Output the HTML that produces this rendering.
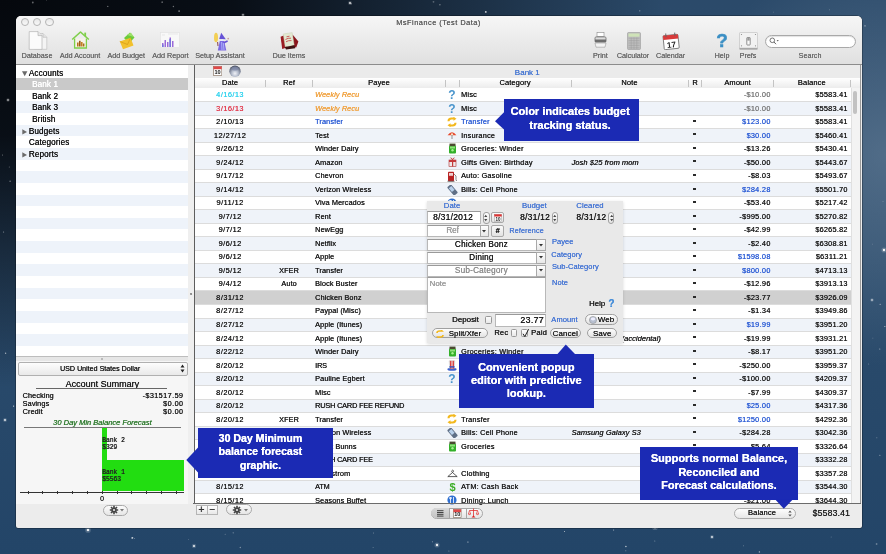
<!DOCTYPE html>
<html><head><meta charset="utf-8"><title>MsFinance</title>
<style>html,body{margin:0;padding:0;width:886px;height:554px;overflow:hidden;position:relative;font-family:'Liberation Sans', sans-serif}</style>
</head><body>
<div style="position:absolute;left:0;top:0;width:886px;height:554px;will-change:transform">
<div style="position:absolute;left:0;top:0;width:886px;height:554px;background:radial-gradient(ellipse 75% 70% at 0% 0%, rgba(5,8,13,1) 0%, rgba(5,8,13,0.9) 35%, rgba(5,8,13,0) 100%), radial-gradient(ellipse 22% 38% at 100% 28%, rgba(105,130,155,0.6), rgba(105,130,155,0) 100%), linear-gradient(to bottom, #2b4a6a 0%, #2c4c6c 45%, #234568 100%)"></div>
<svg style="position:absolute;left:0.00px;top:0.00px" width="886" height="554" viewBox="0 0 886 554"><circle cx="865.0" cy="25.8" r="0.9" fill="#fff" fill-opacity="0.32"/><circle cx="373.6" cy="533.0" r="0.4" fill="#fff" fill-opacity="0.67"/><circle cx="879.9" cy="455.3" r="0.5" fill="#fff" fill-opacity="0.64"/><circle cx="625.9" cy="546.5" r="0.7" fill="#fff" fill-opacity="0.74"/><circle cx="3.6" cy="232.1" r="0.5" fill="#fff" fill-opacity="0.59"/><circle cx="872.4" cy="244.1" r="0.4" fill="#fff" fill-opacity="0.44"/><circle cx="46.6" cy="0.1" r="0.4" fill="#fff" fill-opacity="0.55"/><circle cx="432.4" cy="541.7" r="0.5" fill="#fff" fill-opacity="0.52"/><circle cx="467.9" cy="542.1" r="0.9" fill="#fff" fill-opacity="0.30"/><circle cx="876.8" cy="437.7" r="0.5" fill="#fff" fill-opacity="0.39"/><circle cx="613.6" cy="529.9" r="0.5" fill="#fff" fill-opacity="0.69"/><circle cx="872.9" cy="338.1" r="0.4" fill="#fff" fill-opacity="0.51"/><circle cx="868.6" cy="364.1" r="0.5" fill="#fff" fill-opacity="0.34"/><circle cx="485.8" cy="11.9" r="0.9" fill="#fff" fill-opacity="0.78"/><circle cx="162.2" cy="2.2" r="0.9" fill="#fff" fill-opacity="0.33"/><circle cx="625.8" cy="550.7" r="0.5" fill="#fff" fill-opacity="0.44"/><circle cx="639.8" cy="10.8" r="0.6" fill="#fff" fill-opacity="0.50"/><circle cx="107.8" cy="6.4" r="0.6" fill="#fff" fill-opacity="0.48"/><circle cx="831.2" cy="536.9" r="0.5" fill="#fff" fill-opacity="0.28"/><circle cx="13.6" cy="406.1" r="0.6" fill="#fff" fill-opacity="0.79"/><circle cx="876.6" cy="544.0" r="0.9" fill="#fff" fill-opacity="0.32"/><circle cx="233.2" cy="532.8" r="0.6" fill="#fff" fill-opacity="0.43"/><circle cx="564.5" cy="531.6" r="0.5" fill="#fff" fill-opacity="0.71"/><circle cx="433.5" cy="1.8" r="0.9" fill="#fff" fill-opacity="0.29"/><circle cx="880.1" cy="304.2" r="0.5" fill="#fff" fill-opacity="0.79"/><circle cx="829.5" cy="9.7" r="0.5" fill="#fff" fill-opacity="0.29"/><circle cx="448.9" cy="551.0" r="0.5" fill="#fff" fill-opacity="0.46"/><circle cx="173.4" cy="6.5" r="0.7" fill="#fff" fill-opacity="0.41"/><circle cx="884.9" cy="326.4" r="0.5" fill="#fff" fill-opacity="0.76"/><circle cx="131.9" cy="538.0" r="0.5" fill="#fff" fill-opacity="0.53"/><circle cx="654.8" cy="540.9" r="0.5" fill="#fff" fill-opacity="0.47"/><circle cx="179.1" cy="11.1" r="0.9" fill="#fff" fill-opacity="0.48"/><circle cx="773.4" cy="12.1" r="0.4" fill="#fff" fill-opacity="0.48"/><circle cx="134.7" cy="538.4" r="0.4" fill="#fff" fill-opacity="0.77"/><circle cx="9.3" cy="167.0" r="0.5" fill="#fff" fill-opacity="0.40"/><circle cx="351.2" cy="3.7" r="0.5" fill="#fff" fill-opacity="0.66"/><circle cx="188.7" cy="539.7" r="0.4" fill="#fff" fill-opacity="0.48"/><circle cx="743.5" cy="545.7" r="0.5" fill="#fff" fill-opacity="0.34"/><circle cx="2.5" cy="155.0" r="0.5" fill="#fff" fill-opacity="0.48"/><circle cx="439.9" cy="4.8" r="0.7" fill="#fff" fill-opacity="0.42"/><circle cx="373.1" cy="547.6" r="0.5" fill="#fff" fill-opacity="0.35"/><circle cx="32.8" cy="2.5" r="0.9" fill="#fff" fill-opacity="0.38"/><circle cx="5.6" cy="353.2" r="0.7" fill="#fff" fill-opacity="0.59"/><circle cx="10.1" cy="181.3" r="0.7" fill="#fff" fill-opacity="0.45"/><circle cx="240.3" cy="547.5" r="0.7" fill="#fff" fill-opacity="0.42"/><circle cx="883.0" cy="201.5" r="0.4" fill="#fff" fill-opacity="0.46"/><circle cx="132.4" cy="537.8" r="0.9" fill="#fff" fill-opacity="0.74"/><circle cx="759.4" cy="551.9" r="0.7" fill="#fff" fill-opacity="0.63"/><circle cx="225.2" cy="534.2" r="0.5" fill="#fff" fill-opacity="0.36"/><circle cx="879.8" cy="348.9" r="0.5" fill="#fff" fill-opacity="0.66"/><circle cx="88" cy="530" r="2.9" fill="#fff" fill-opacity="0.18"/><circle cx="88" cy="530" r="1.3" fill="#fff" fill-opacity="0.9"/><circle cx="194" cy="546" r="2.2" fill="#fff" fill-opacity="0.18"/><circle cx="194" cy="546" r="1.0" fill="#fff" fill-opacity="0.9"/><circle cx="655" cy="527" r="3.1" fill="#fff" fill-opacity="0.18"/><circle cx="655" cy="527" r="1.4" fill="#fff" fill-opacity="0.9"/><circle cx="437" cy="545" r="2.6" fill="#fff" fill-opacity="0.18"/><circle cx="437" cy="545" r="1.2" fill="#fff" fill-opacity="0.9"/><circle cx="712" cy="537" r="2.0" fill="#fff" fill-opacity="0.18"/><circle cx="712" cy="537" r="0.9" fill="#fff" fill-opacity="0.9"/><circle cx="884" cy="250" r="2.6" fill="#fff" fill-opacity="0.18"/><circle cx="884" cy="250" r="1.2" fill="#fff" fill-opacity="0.9"/><circle cx="872" cy="300" r="1.8" fill="#fff" fill-opacity="0.18"/><circle cx="872" cy="300" r="0.8" fill="#fff" fill-opacity="0.9"/><circle cx="350" cy="3" r="2.0" fill="#fff" fill-opacity="0.18"/><circle cx="350" cy="3" r="0.9" fill="#fff" fill-opacity="0.9"/><circle cx="523" cy="30" r="2.2" fill="#fff" fill-opacity="0.18"/><circle cx="523" cy="30" r="1.0" fill="#fff" fill-opacity="0.9"/><circle cx="745" cy="28" r="1.8" fill="#fff" fill-opacity="0.18"/><circle cx="745" cy="28" r="0.8" fill="#fff" fill-opacity="0.9"/><circle cx="243" cy="15" r="1.8" fill="#fff" fill-opacity="0.18"/><circle cx="243" cy="15" r="0.8" fill="#fff" fill-opacity="0.9"/><circle cx="62" cy="48" r="1.8" fill="#fff" fill-opacity="0.18"/><circle cx="62" cy="48" r="0.8" fill="#fff" fill-opacity="0.9"/><circle cx="8" cy="100" r="1.8" fill="#fff" fill-opacity="0.18"/><circle cx="8" cy="100" r="0.8" fill="#fff" fill-opacity="0.9"/><circle cx="5" cy="420" r="2.0" fill="#fff" fill-opacity="0.18"/><circle cx="5" cy="420" r="0.9" fill="#fff" fill-opacity="0.9"/></svg>
<div style="position:absolute;left:16.00px;top:15.60px;width:846.00px;height:512.40px;background:#ececec;border-radius:5px 5px 2px 2px;box-shadow:0 0 0 0.5px rgba(0,0,0,0.5)"></div>
<div style="position:absolute;left:16.00px;top:15.60px;width:846.00px;height:48.40px;background:linear-gradient(#f6f6f6,#e0e0e0);border-radius:5px 5px 0 0"></div>
<div style="position:absolute;left:16.00px;top:64.00px;width:846.00px;height:1.00px;background:#8c8c8c"></div>
<div style="position:absolute;left:20.50px;top:17.9px;width:6.6px;height:6.6px;border-radius:50%;border:0.7px solid #b4b4b4;background:linear-gradient(#e8e8e8,#f8f8f8)"></div>
<div style="position:absolute;left:32.70px;top:17.9px;width:6.6px;height:6.6px;border-radius:50%;border:0.7px solid #b4b4b4;background:linear-gradient(#e8e8e8,#f8f8f8)"></div>
<div style="position:absolute;left:45.00px;top:17.9px;width:6.6px;height:6.6px;border-radius:50%;border:0.7px solid #b4b4b4;background:linear-gradient(#e8e8e8,#f8f8f8)"></div>
<div style="position:absolute;top:12.50px;height:20px;line-height:20px;font-size:7.4px;color:#5e5e5e;font-weight:normal;font-style:normal;white-space:nowrap;letter-spacing:0.49px;font-family:'Liberation Sans', sans-serif;text-shadow:0.10px 0 0 #5e5e5e;left:338.50px;width:200px;text-align:center">MsFinance (Test Data)</div>
<div style="position:absolute;top:45.60px;height:20px;line-height:20px;font-size:7.2px;color:#6a6a6a;font-weight:normal;font-style:normal;white-space:nowrap;letter-spacing:0px;font-family:'Liberation Sans', sans-serif;text-shadow:0.08px 0 0 #6a6a6a;left:-13.00px;width:100px;text-align:center">Database</div>
<div style="position:absolute;top:45.60px;height:20px;line-height:20px;font-size:7.2px;color:#6a6a6a;font-weight:normal;font-style:normal;white-space:nowrap;letter-spacing:0px;font-family:'Liberation Sans', sans-serif;text-shadow:0.08px 0 0 #6a6a6a;left:30.00px;width:100px;text-align:center">Add Account</div>
<div style="position:absolute;top:45.60px;height:20px;line-height:20px;font-size:7.2px;color:#6a6a6a;font-weight:normal;font-style:normal;white-space:nowrap;letter-spacing:0px;font-family:'Liberation Sans', sans-serif;text-shadow:0.08px 0 0 #6a6a6a;left:76.25px;width:100px;text-align:center">Add Budget</div>
<div style="position:absolute;top:45.60px;height:20px;line-height:20px;font-size:7.2px;color:#6a6a6a;font-weight:normal;font-style:normal;white-space:nowrap;letter-spacing:0px;font-family:'Liberation Sans', sans-serif;text-shadow:0.08px 0 0 #6a6a6a;left:120.40px;width:100px;text-align:center">Add Report</div>
<div style="position:absolute;top:45.60px;height:20px;line-height:20px;font-size:7.2px;color:#6a6a6a;font-weight:normal;font-style:normal;white-space:nowrap;letter-spacing:0px;font-family:'Liberation Sans', sans-serif;text-shadow:0.08px 0 0 #6a6a6a;left:170.00px;width:100px;text-align:center">Setup Assistant</div>
<div style="position:absolute;top:45.60px;height:20px;line-height:20px;font-size:7.2px;color:#6a6a6a;font-weight:normal;font-style:normal;white-space:nowrap;letter-spacing:0px;font-family:'Liberation Sans', sans-serif;text-shadow:0.08px 0 0 #6a6a6a;left:239.00px;width:100px;text-align:center">Due Items</div>
<div style="position:absolute;top:45.60px;height:20px;line-height:20px;font-size:7.2px;color:#6a6a6a;font-weight:normal;font-style:normal;white-space:nowrap;letter-spacing:0px;font-family:'Liberation Sans', sans-serif;text-shadow:0.08px 0 0 #6a6a6a;left:550.40px;width:100px;text-align:center">Print</div>
<div style="position:absolute;top:45.60px;height:20px;line-height:20px;font-size:7.2px;color:#6a6a6a;font-weight:normal;font-style:normal;white-space:nowrap;letter-spacing:0px;font-family:'Liberation Sans', sans-serif;text-shadow:0.08px 0 0 #6a6a6a;left:583.00px;width:100px;text-align:center">Calculator</div>
<div style="position:absolute;top:45.60px;height:20px;line-height:20px;font-size:7.2px;color:#6a6a6a;font-weight:normal;font-style:normal;white-space:nowrap;letter-spacing:0px;font-family:'Liberation Sans', sans-serif;text-shadow:0.08px 0 0 #6a6a6a;left:620.60px;width:100px;text-align:center">Calendar</div>
<div style="position:absolute;top:45.60px;height:20px;line-height:20px;font-size:7.2px;color:#6a6a6a;font-weight:normal;font-style:normal;white-space:nowrap;letter-spacing:0px;font-family:'Liberation Sans', sans-serif;text-shadow:0.08px 0 0 #6a6a6a;left:672.00px;width:100px;text-align:center">Help</div>
<div style="position:absolute;top:45.60px;height:20px;line-height:20px;font-size:7.2px;color:#6a6a6a;font-weight:normal;font-style:normal;white-space:nowrap;letter-spacing:0px;font-family:'Liberation Sans', sans-serif;text-shadow:0.08px 0 0 #6a6a6a;left:698.00px;width:100px;text-align:center">Prefs</div>
<div style="position:absolute;top:45.60px;height:20px;line-height:20px;font-size:7.2px;color:#6a6a6a;font-weight:normal;font-style:normal;white-space:nowrap;letter-spacing:0px;font-family:'Liberation Sans', sans-serif;text-shadow:0.08px 0 0 #6a6a6a;left:760.00px;width:100px;text-align:center">Search</div>
<svg style="position:absolute;left:27.50px;top:31.00px" width="20" height="19" viewBox="0 0 20 19">
<path d="M6.5 2.5 H15 L18.8 6.3 V18.3 H6.5 Z" fill="#f4f4f4" stroke="#b9b9b9" stroke-width="0.6"/>
<path d="M15 2.5 V6.3 H18.8" fill="#e2e2e2" stroke="#b9b9b9" stroke-width="0.6"/>
<path d="M1.2 0.6 H10 L14 4.6 V18.4 H1.2 Z" fill="#fbfbfb" stroke="#aaaaaa" stroke-width="0.6"/>
<path d="M10 0.6 V4.6 H14" fill="#e6e6e6" stroke="#aaaaaa" stroke-width="0.6"/>
</svg>
<svg style="position:absolute;left:71.20px;top:31.20px" width="19" height="18" viewBox="0 0 19 18">
<path d="M1.2 8.5 L9.5 1 L17.8 8.5" fill="none" stroke="#7fcf4a" stroke-width="1.6" stroke-linejoin="round"/>
<path d="M3.6 7.5 V17 H15.4 V7.5" fill="#f6f3e8" stroke="#7fcf4a" stroke-width="1.3"/>
<rect x="13.3" y="1.6" width="1.8" height="3.6" fill="#7fcf4a"/>
<rect x="6" y="11.5" width="1.6" height="4" fill="#b8731f"/><rect x="8" y="9.8" width="1.6" height="5.7" fill="#9a5a14"/><rect x="10" y="11" width="1.6" height="4.5" fill="#c58020"/><rect x="12" y="12.5" width="1.4" height="3" fill="#a66a1a"/>
</svg>
<svg style="position:absolute;left:118.50px;top:32.20px" width="16" height="18" viewBox="0 0 16 18">
<path d="M5 6 L11 0.5 L15.5 5.5 L10 11.5 Z" fill="#6ccb3a"/>
<path d="M8 3 L12 0.8 L15 5" fill="#9be067"/>
<path d="M0.8 9.5 L11.5 5.8 L14.5 13.5 L4 17.2 Z" fill="#f2c12e"/>
<path d="M0.8 9.5 L8.5 12.5 L11.5 5.8" fill="none" stroke="#d99a10" stroke-width="0.7"/>
</svg>
<svg style="position:absolute;left:160.00px;top:32.40px" width="20" height="16" viewBox="0 0 20 16">
<rect x="0.5" y="0.5" width="19" height="15" fill="#f8f8f8" stroke="#e2e2e2" stroke-width="0.6"/>
<path d="M2 15 V11 H3.5 V15 M4.5 15 V8 H6 V15 M7 15 V10 H8.5 V15 M9.5 15 V5.5 H11 V15 M12 15 V9 H13.5 V15" fill="#9a6ad8"/>
<path d="M3 15 V12.5 M10 15 V7" stroke="#5a7ae0" stroke-width="1"/>
<path d="M2 3 H5 M8 2 H18" stroke="#dcdcdc" stroke-width="0.6"/>
</svg>
<svg style="position:absolute;left:212.50px;top:31.50px" width="17" height="19" viewBox="0 0 17 19">
<ellipse cx="3" cy="5.5" rx="2" ry="4.8" fill="#f2cf55"/>
<path d="M4.6 10 L5 14" stroke="#7a2a3a" stroke-width="0.9"/>
<path d="M8.2 0.8 L6.2 7 L12.8 7.3 Z" fill="#6652d6"/>
<circle cx="9.2" cy="8.6" r="1.3" fill="#e6eaff"/>
<path d="M6.8 9 H11.2 L13.3 18.4 H4.8 Z" fill="#7b68e2"/>
<path d="M8.6 10 L9 18 M10.3 11 L11 18" stroke="#b8c4ff" stroke-width="0.8"/>
<path d="M10.8 10.8 L14.6 9" stroke="#6652d6" stroke-width="1.6"/>
<circle cx="15.2" cy="6.6" r="0.9" fill="#c8a0a0"/>
</svg>
<svg style="position:absolute;left:279.80px;top:31.60px" width="19" height="18" viewBox="0 0 19 18">
<path d="M0.6 4.8 L5.5 2.8 L6.8 15.5 L2.2 17 Z" fill="#9a1c22"/>
<path d="M12.5 2.5 L18.4 9.5 L16.2 15.6 L11.5 14.5 Z" fill="#8a161c"/>
<path d="M3.2 2 L12.2 0.6 L14.2 13.2 L5.2 15 Z" fill="#e2e9d2" stroke="#c8ccb0" stroke-width="0.4"/>
<path d="M5.5 7.5 Q8 5.8 11 6.2 M6 9.8 Q8.5 8.2 11.5 8.6 M6.5 4.8 L9.5 4.2" stroke="#c85050" stroke-width="0.9" fill="none"/>
<path d="M4.8 15 L14.4 13.2 L15.2 16.2 L6 17.6 Z" fill="#3e1212"/>
</svg>
<svg style="position:absolute;left:594.20px;top:32.40px" width="13" height="16" viewBox="0 0 13 16">
<rect x="3" y="0.6" width="7" height="4" fill="#fff" stroke="#8a8a8a" stroke-width="0.6"/>
<rect x="0.6" y="4.5" width="11.8" height="6" rx="1.5" fill="#6d6d6d"/>
<rect x="1.4" y="5.3" width="10.2" height="2.2" fill="#dcdcdc"/>
<path d="M1 11 H12 L11 15.2 H2 Z" fill="#f4f4f4" stroke="#999" stroke-width="0.6"/>
</svg>
<svg style="position:absolute;left:626.50px;top:32.30px" width="14" height="18" viewBox="0 0 14 18">
<rect x="0.5" y="0.5" width="13" height="17" rx="1" fill="#bdbdbd" stroke="#9a9a9a" stroke-width="0.6"/>
<rect x="1.5" y="1.5" width="11" height="3.2" fill="#cfe3b8"/>
<path d="M1.5 6.2 H12.5 M1.5 8.6 H12.5 M1.5 11 H12.5 M1.5 13.4 H12.5 M1.5 15.8 H12.5 M4.2 5.5 V17 M7 5.5 V17 M9.8 5.5 V17" stroke="#9c9c9c" stroke-width="0.5"/>
</svg>
<svg style="position:absolute;left:662.00px;top:32.00px" width="18" height="18" viewBox="0 0 18 18">
<g transform="rotate(-6 9 9)">
<rect x="1.5" y="3" width="15" height="14" rx="1" fill="#fff" stroke="#555" stroke-width="0.7"/>
<rect x="1.5" y="3" width="15" height="4.2" fill="#d83a3a"/>
<rect x="4" y="1" width="1" height="3.5" fill="#666"/><rect x="13" y="1" width="1" height="3.5" fill="#666"/>
<text x="9" y="15.5" font-size="8" font-family="Liberation Sans" font-weight="bold" text-anchor="middle" fill="#222">17</text>
</g>
</svg>
<svg style="position:absolute;left:716.30px;top:31.50px" width="12" height="16" viewBox="0 0 12 16">
<text x="6" y="15" font-size="19" font-family="Liberation Sans" font-weight="bold" text-anchor="middle" fill="#3b8fc4" stroke="#3b8fc4" stroke-width="0.45">?</text>
</svg>
<svg style="position:absolute;left:738.80px;top:32.30px" width="19" height="18" viewBox="0 0 19 18">
<rect x="0.5" y="0.5" width="18" height="16.5" rx="1" fill="#f2f2f2" stroke="#bdbdbd" stroke-width="0.6"/>
<rect x="0.5" y="15.8" width="18" height="1.8" fill="#a8a8a8"/>
<circle cx="2.5" cy="2.5" r="0.6" fill="#888"/><circle cx="16.5" cy="2.5" r="0.6" fill="#888"/><circle cx="2.5" cy="13.8" r="0.6" fill="#888"/><circle cx="16.5" cy="13.8" r="0.6" fill="#888"/>
<rect x="7.8" y="5.5" width="3.4" height="7.5" rx="0.6" fill="#fafafa" stroke="#666" stroke-width="0.7"/>
<rect x="8.3" y="5.8" width="2.4" height="2.8" fill="#999"/>
</svg>
<div style="position:absolute;left:764.50px;top:34.50px;width:91.50px;height:13.00px;background:#fff;border:0.7px solid #a9a9a9;border-radius:7px;box-sizing:border-box;box-shadow:inset 0 0.7px 1px rgba(0,0,0,0.15)"></div>
<svg style="position:absolute;left:768.50px;top:37.00px" width="10" height="8" viewBox="0 0 10 8"><circle cx="3.3" cy="3.3" r="2.3" fill="none" stroke="#666" stroke-width="0.9"/><path d="M5 5 L7 7.2" stroke="#666" stroke-width="1"/><path d="M7.6 3 H9.8 L8.7 4.4 Z" fill="#666"/></svg>
<div style="position:absolute;left:188.20px;top:65.00px;width:5.40px;height:438.50px;background:#efefef"></div>
<div style="position:absolute;left:189.6px;top:293px;width:2px;height:1.6px;background:#777;border-radius:1px;transform:rotate(-30deg)"></div>
<div style="position:absolute;left:16.00px;top:65.00px;width:172.20px;height:291.00px;background:#fff"></div>
<div style="position:absolute;left:16.00px;top:78.05px;width:172.20px;height:11.65px;background:#eef3fa"></div>
<div style="position:absolute;left:16.00px;top:101.35px;width:172.20px;height:11.65px;background:#eef3fa"></div>
<div style="position:absolute;left:16.00px;top:124.65px;width:172.20px;height:11.65px;background:#eef3fa"></div>
<div style="position:absolute;left:16.00px;top:147.95px;width:172.20px;height:11.65px;background:#eef3fa"></div>
<div style="position:absolute;left:16.00px;top:171.25px;width:172.20px;height:11.65px;background:#eef3fa"></div>
<div style="position:absolute;left:16.00px;top:194.55px;width:172.20px;height:11.65px;background:#eef3fa"></div>
<div style="position:absolute;left:16.00px;top:217.85px;width:172.20px;height:11.65px;background:#eef3fa"></div>
<div style="position:absolute;left:16.00px;top:241.15px;width:172.20px;height:11.65px;background:#eef3fa"></div>
<div style="position:absolute;left:16.00px;top:264.45px;width:172.20px;height:11.65px;background:#eef3fa"></div>
<div style="position:absolute;left:16.00px;top:287.75px;width:172.20px;height:11.65px;background:#eef3fa"></div>
<div style="position:absolute;left:16.00px;top:311.05px;width:172.20px;height:11.65px;background:#eef3fa"></div>
<div style="position:absolute;left:16.00px;top:334.35px;width:172.20px;height:11.65px;background:#eef3fa"></div>
<div style="position:absolute;left:16.00px;top:78.05px;width:172.20px;height:11.65px;background:#c9c9c9"></div>
<div style="position:absolute;top:63.53px;height:20px;line-height:20px;font-size:8.2px;color:#111;font-weight:normal;font-style:normal;white-space:nowrap;letter-spacing:0.1px;font-family:'Liberation Sans', sans-serif;text-shadow:0.16px 0 0 #111;left:28.75px">Accounts</div>
<svg style="position:absolute;left:21.70px;top:70.53px" width="6" height="6" viewBox="0 0 6 6"><path d="M0 0.3 L5.4 0.3 L2.7 5.3 Z" fill="#6a6a6a"/></svg>
<div style="position:absolute;top:75.18px;height:20px;line-height:20px;font-size:8.2px;color:#ffffff;font-weight:normal;font-style:normal;white-space:nowrap;letter-spacing:0.1px;font-family:'Liberation Sans', sans-serif;text-shadow:0.16px 0 0 #ffffff;left:32.00px">Bank 1</div>
<div style="position:absolute;top:86.83px;height:20px;line-height:20px;font-size:8.2px;color:#111;font-weight:normal;font-style:normal;white-space:nowrap;letter-spacing:0.1px;font-family:'Liberation Sans', sans-serif;text-shadow:0.16px 0 0 #111;left:32.00px">Bank 2</div>
<div style="position:absolute;top:98.48px;height:20px;line-height:20px;font-size:8.2px;color:#111;font-weight:normal;font-style:normal;white-space:nowrap;letter-spacing:0.1px;font-family:'Liberation Sans', sans-serif;text-shadow:0.16px 0 0 #111;left:32.00px">Bank 3</div>
<div style="position:absolute;top:110.12px;height:20px;line-height:20px;font-size:8.2px;color:#111;font-weight:normal;font-style:normal;white-space:nowrap;letter-spacing:0.1px;font-family:'Liberation Sans', sans-serif;text-shadow:0.16px 0 0 #111;left:32.00px">British</div>
<div style="position:absolute;top:121.77px;height:20px;line-height:20px;font-size:8.2px;color:#111;font-weight:normal;font-style:normal;white-space:nowrap;letter-spacing:0.1px;font-family:'Liberation Sans', sans-serif;text-shadow:0.16px 0 0 #111;left:28.75px">Budgets</div>
<svg style="position:absolute;left:22.00px;top:128.77px" width="6" height="6" viewBox="0 0 6 6"><path d="M0.3 0.2 L5 2.9 L0.3 5.6 Z" fill="#6a6a6a"/></svg>
<div style="position:absolute;top:133.42px;height:20px;line-height:20px;font-size:8.2px;color:#111;font-weight:normal;font-style:normal;white-space:nowrap;letter-spacing:0.1px;font-family:'Liberation Sans', sans-serif;text-shadow:0.16px 0 0 #111;left:28.75px">Categories</div>
<div style="position:absolute;top:145.07px;height:20px;line-height:20px;font-size:8.2px;color:#111;font-weight:normal;font-style:normal;white-space:nowrap;letter-spacing:0.1px;font-family:'Liberation Sans', sans-serif;text-shadow:0.16px 0 0 #111;left:28.75px">Reports</div>
<svg style="position:absolute;left:22.00px;top:152.07px" width="6" height="6" viewBox="0 0 6 6"><path d="M0.3 0.2 L5 2.9 L0.3 5.6 Z" fill="#6a6a6a"/></svg>
<div style="position:absolute;left:16.00px;top:356.00px;width:172.20px;height:0.70px;background:#bdbdbd"></div>
<div style="position:absolute;left:16.00px;top:356.70px;width:172.20px;height:4.30px;background:#e6e6e6"></div>
<div style="position:absolute;left:101px;top:357.6px;width:2px;height:2px;border-radius:50%;background:#aaa"></div>
<div style="position:absolute;left:16.00px;top:361.00px;width:172.20px;height:142.50px;background:#f6f6f6"></div>
<div style="position:absolute;left:17.50px;top:361.50px;width:170.50px;height:14.00px;background:linear-gradient(#fdfdfd,#e9e9e9);border:0.7px solid #b0b0b0;border-radius:2px;box-sizing:border-box"></div>
<div style="position:absolute;top:358.70px;height:20px;line-height:20px;font-size:7.1px;color:#1a1a1a;font-weight:normal;font-style:normal;white-space:nowrap;letter-spacing:0px;font-family:'Liberation Sans', sans-serif;text-shadow:0.28px 0 0 #1a1a1a;left:20.00px;width:160px;text-align:center">USD United States Dollar</div>
<svg style="position:absolute;left:179.50px;top:364.00px" width="5" height="9" viewBox="0 0 5 9"><path d="M0.5 3.5 L2.5 0.5 L4.5 3.5Z M0.5 5.5 L2.5 8.5 L4.5 5.5Z" fill="#222"/></svg>
<div style="position:absolute;top:373.70px;height:20px;line-height:20px;font-size:9px;color:#1a1a1a;font-weight:normal;font-style:normal;white-space:nowrap;letter-spacing:0px;font-family:'Liberation Sans', sans-serif;text-shadow:0.28px 0 0 #1a1a1a;left:22.30px;width:160px;text-align:center">Account Summary</div>
<div style="position:absolute;left:36.00px;top:387.60px;width:131.00px;height:0.70px;background:#666"></div>
<div style="position:absolute;top:385.50px;height:20px;line-height:20px;font-size:7.3px;color:#1a1a1a;font-weight:normal;font-style:normal;white-space:nowrap;letter-spacing:0.1px;font-family:'Liberation Sans', sans-serif;text-shadow:0.28px 0 0 #1a1a1a;left:22.50px">Checking</div>
<div style="position:absolute;top:385.50px;height:20px;line-height:20px;font-size:7.3px;color:#1a1a1a;font-weight:normal;font-style:normal;white-space:nowrap;letter-spacing:0.4px;font-family:'Liberation Sans', sans-serif;text-shadow:0.28px 0 0 #1a1a1a;left:-216.70px;width:400px;text-align:right">-$31517.59</div>
<div style="position:absolute;top:393.50px;height:20px;line-height:20px;font-size:7.3px;color:#1a1a1a;font-weight:normal;font-style:normal;white-space:nowrap;letter-spacing:0.1px;font-family:'Liberation Sans', sans-serif;text-shadow:0.28px 0 0 #1a1a1a;left:22.50px">Savings</div>
<div style="position:absolute;top:393.50px;height:20px;line-height:20px;font-size:7.3px;color:#1a1a1a;font-weight:normal;font-style:normal;white-space:nowrap;letter-spacing:0.4px;font-family:'Liberation Sans', sans-serif;text-shadow:0.28px 0 0 #1a1a1a;left:-216.70px;width:400px;text-align:right">$0.00</div>
<div style="position:absolute;top:401.50px;height:20px;line-height:20px;font-size:7.3px;color:#1a1a1a;font-weight:normal;font-style:normal;white-space:nowrap;letter-spacing:0.1px;font-family:'Liberation Sans', sans-serif;text-shadow:0.28px 0 0 #1a1a1a;left:22.50px">Credit</div>
<div style="position:absolute;top:401.50px;height:20px;line-height:20px;font-size:7.3px;color:#1a1a1a;font-weight:normal;font-style:normal;white-space:nowrap;letter-spacing:0.4px;font-family:'Liberation Sans', sans-serif;text-shadow:0.28px 0 0 #1a1a1a;left:-216.70px;width:400px;text-align:right">$0.00</div>
<div style="position:absolute;top:413.00px;height:20px;line-height:20px;font-size:7.5px;color:#2e7a2e;font-weight:normal;font-style:italic;white-space:nowrap;letter-spacing:0px;font-family:'Liberation Sans', sans-serif;text-shadow:0.28px 0 0 #2e7a2e;left:17.30px;width:170px;text-align:center">30 Day Min Balance Forecast</div>
<div style="position:absolute;left:24.00px;top:426.50px;width:157.00px;height:0.70px;background:#777"></div>
<div style="position:absolute;left:102.00px;top:428.00px;width:5.00px;height:31.50px;background:#22dd11"></div>
<div style="position:absolute;left:102.00px;top:460.00px;width:82.00px;height:31.00px;background:#22dd11"></div>
<div style="position:absolute;top:431.00px;height:20px;line-height:20px;font-size:6.3px;color:#222;font-weight:normal;font-style:normal;white-space:nowrap;letter-spacing:0px;font-family:'Liberation Mono', monospace;text-shadow:0.40px 0 0 #222;left:102.00px">Bank 2</div>
<div style="position:absolute;top:437.60px;height:20px;line-height:20px;font-size:6.3px;color:#222;font-weight:normal;font-style:normal;white-space:nowrap;letter-spacing:0px;font-family:'Liberation Mono', monospace;text-shadow:0.40px 0 0 #222;left:102.00px">$329</div>
<div style="position:absolute;top:463.00px;height:20px;line-height:20px;font-size:6.3px;color:#222;font-weight:normal;font-style:normal;white-space:nowrap;letter-spacing:0px;font-family:'Liberation Mono', monospace;text-shadow:0.40px 0 0 #222;left:102.00px">Bank 1</div>
<div style="position:absolute;top:469.60px;height:20px;line-height:20px;font-size:6.3px;color:#222;font-weight:normal;font-style:normal;white-space:nowrap;letter-spacing:0px;font-family:'Liberation Mono', monospace;text-shadow:0.40px 0 0 #222;left:102.00px">$5563</div>
<div style="position:absolute;left:20.00px;top:492.00px;width:164.00px;height:0.90px;background:#333"></div>
<div style="position:absolute;left:27.60px;top:490.50px;width:0.80px;height:3.50px;background:#333"></div>
<div style="position:absolute;left:42.42px;top:490.50px;width:0.80px;height:3.50px;background:#333"></div>
<div style="position:absolute;left:57.24px;top:490.50px;width:0.80px;height:3.50px;background:#333"></div>
<div style="position:absolute;left:72.06px;top:490.50px;width:0.80px;height:3.50px;background:#333"></div>
<div style="position:absolute;left:86.88px;top:490.50px;width:0.80px;height:3.50px;background:#333"></div>
<div style="position:absolute;left:101.70px;top:490.50px;width:0.80px;height:3.50px;background:#333"></div>
<div style="position:absolute;left:116.52px;top:490.50px;width:0.80px;height:3.50px;background:#333"></div>
<div style="position:absolute;left:131.34px;top:490.50px;width:0.80px;height:3.50px;background:#333"></div>
<div style="position:absolute;left:146.16px;top:490.50px;width:0.80px;height:3.50px;background:#333"></div>
<div style="position:absolute;left:160.98px;top:490.50px;width:0.80px;height:3.50px;background:#333"></div>
<div style="position:absolute;left:175.80px;top:490.50px;width:0.80px;height:3.50px;background:#333"></div>
<div style="position:absolute;top:489.00px;height:20px;line-height:20px;font-size:7px;color:#222;font-weight:normal;font-style:normal;white-space:nowrap;letter-spacing:0px;font-family:'Liberation Sans', sans-serif;text-shadow:0.28px 0 0 #222;left:97.00px;width:10px;text-align:center">0</div>
<div style="position:absolute;left:102.50px;top:504.80px;width:25.00px;height:11.20px;background:linear-gradient(#fbfbfb,#e6e6e6);border:0.7px solid #a8a8a8;border-radius:6px;box-sizing:border-box"></div>
<svg style="position:absolute;left:108.50px;top:505.30px" width="10" height="10" viewBox="0 0 10 10"><g fill="#444"><circle cx="5" cy="5" r="2.6"/><g stroke="#444" stroke-width="1.6"><path d="M5 0.8V9.2M0.8 5H9.2M2 2L8 8M8 2L2 8"/></g><circle cx="5" cy="5" r="1.1" fill="#e9e9e9"/></g></svg>
<svg style="position:absolute;left:120.00px;top:509.00px" width="4" height="3" viewBox="0 0 4 3"><path d="M0 0H4L2 2.5Z" fill="#777"/></svg>
<div style="position:absolute;left:193.80px;top:65.00px;width:666.40px;height:438.50px;background:#fff"></div>
<div style="position:absolute;left:193.80px;top:65.00px;width:666.40px;height:12.60px;background:#ebebeb"></div>
<div style="position:absolute;left:193.80px;top:77.60px;width:666.40px;height:0.60px;background:#cfcfcf"></div>
<div style="position:absolute;left:193.80px;top:78.20px;width:666.40px;height:9.40px;background:linear-gradient(#ffffff,#ececec)"></div>
<div style="position:absolute;left:193.80px;top:87.60px;width:666.40px;height:0.70px;background:#bdbdbd"></div>
<div style="position:absolute;top:62.80px;height:20px;line-height:20px;font-size:8px;color:#4777d2;font-weight:normal;font-style:normal;white-space:nowrap;letter-spacing:0px;font-family:'Liberation Sans', sans-serif;text-shadow:0.00px 0 0 #4777d2;left:487.30px;width:80px;text-align:center">Bank 1</div>
<svg style="position:absolute;left:212.90px;top:65.80px" width="9.2" height="10" viewBox="0 0 9.2 10">
<rect x="0.4" y="0.4" width="8.399999999999999" height="9.2" fill="#fff" stroke="#8d7a6a" stroke-width="0.7"/>
<rect x="0.4" y="0.4" width="8.399999999999999" height="2.8" fill="#e04848"/>
<text x="4.6" y="8.5" font-size="5.6" font-family="Liberation Sans" font-weight="bold" text-anchor="middle" fill="#111">10</text>
</svg>
<svg style="position:absolute;left:229.20px;top:64.90px" width="12" height="12.5" viewBox="0 0 12 12.5">
<defs><radialGradient id="gg" cx="50%" cy="70%" r="65%"><stop offset="0" stop-color="#f0f2f8"/><stop offset="0.45" stop-color="#b4bccc"/><stop offset="0.85" stop-color="#6a7286"/><stop offset="1" stop-color="#4a5060"/></radialGradient></defs>
<circle cx="6" cy="6.2" r="5.7" fill="url(#gg)"/>
<ellipse cx="6" cy="3.6" rx="3.2" ry="2" fill="#7d88a8" opacity="0.7"/>
</svg>
<div style="position:absolute;left:265.35px;top:79.50px;width:0.70px;height:7.00px;background:#c4c4c4"></div>
<div style="position:absolute;left:312.15px;top:79.50px;width:0.70px;height:7.00px;background:#c4c4c4"></div>
<div style="position:absolute;left:444.65px;top:79.50px;width:0.70px;height:7.00px;background:#c4c4c4"></div>
<div style="position:absolute;left:458.65px;top:79.50px;width:0.70px;height:7.00px;background:#c4c4c4"></div>
<div style="position:absolute;left:570.65px;top:79.50px;width:0.70px;height:7.00px;background:#c4c4c4"></div>
<div style="position:absolute;left:688.40px;top:79.50px;width:0.70px;height:7.00px;background:#c4c4c4"></div>
<div style="position:absolute;left:701.40px;top:79.50px;width:0.70px;height:7.00px;background:#c4c4c4"></div>
<div style="position:absolute;left:772.65px;top:79.50px;width:0.70px;height:7.00px;background:#c4c4c4"></div>
<div style="position:absolute;left:849.65px;top:79.50px;width:0.70px;height:7.00px;background:#c4c4c4"></div>
<div style="position:absolute;top:72.90px;height:20px;line-height:20px;font-size:7.5px;color:#1a1a1a;font-weight:normal;font-style:normal;white-space:nowrap;letter-spacing:0.1px;font-family:'Liberation Sans', sans-serif;text-shadow:0.16px 0 0 #1a1a1a;left:180.00px;width:100px;text-align:center">Date</div>
<div style="position:absolute;top:72.90px;height:20px;line-height:20px;font-size:7.5px;color:#1a1a1a;font-weight:normal;font-style:normal;white-space:nowrap;letter-spacing:0.1px;font-family:'Liberation Sans', sans-serif;text-shadow:0.16px 0 0 #1a1a1a;left:239.00px;width:100px;text-align:center">Ref</div>
<div style="position:absolute;top:72.90px;height:20px;line-height:20px;font-size:7.5px;color:#1a1a1a;font-weight:normal;font-style:normal;white-space:nowrap;letter-spacing:0.1px;font-family:'Liberation Sans', sans-serif;text-shadow:0.16px 0 0 #1a1a1a;left:329.00px;width:100px;text-align:center">Payee</div>
<div style="position:absolute;top:72.90px;height:20px;line-height:20px;font-size:7.5px;color:#1a1a1a;font-weight:normal;font-style:normal;white-space:nowrap;letter-spacing:0.1px;font-family:'Liberation Sans', sans-serif;text-shadow:0.16px 0 0 #1a1a1a;left:465.00px;width:100px;text-align:center">Category</div>
<div style="position:absolute;top:72.90px;height:20px;line-height:20px;font-size:7.5px;color:#1a1a1a;font-weight:normal;font-style:normal;white-space:nowrap;letter-spacing:0.1px;font-family:'Liberation Sans', sans-serif;text-shadow:0.16px 0 0 #1a1a1a;left:579.40px;width:100px;text-align:center">Note</div>
<div style="position:absolute;top:72.90px;height:20px;line-height:20px;font-size:7.5px;color:#1a1a1a;font-weight:normal;font-style:normal;white-space:nowrap;letter-spacing:0.1px;font-family:'Liberation Sans', sans-serif;text-shadow:0.16px 0 0 #1a1a1a;left:645.00px;width:100px;text-align:center">R</div>
<div style="position:absolute;top:72.90px;height:20px;line-height:20px;font-size:7.5px;color:#1a1a1a;font-weight:normal;font-style:normal;white-space:nowrap;letter-spacing:0.1px;font-family:'Liberation Sans', sans-serif;text-shadow:0.16px 0 0 #1a1a1a;left:687.50px;width:100px;text-align:center">Amount</div>
<div style="position:absolute;top:72.90px;height:20px;line-height:20px;font-size:7.5px;color:#1a1a1a;font-weight:normal;font-style:normal;white-space:nowrap;letter-spacing:0.1px;font-family:'Liberation Sans', sans-serif;text-shadow:0.16px 0 0 #1a1a1a;left:761.75px;width:100px;text-align:center">Balance</div>
<div style="position:absolute;left:193.8px;top:88.24px;width:666.4000000000001px;height:414.96px;overflow:hidden">
<div style="position:absolute;left:0;top:0">
<div style="position:absolute;left:0.00px;top:0.00px;width:666.40px;height:13.52px;background:#ffffff"></div>
<div style="position:absolute;left:0.00px;top:13.52px;width:666.40px;height:13.52px;background:#eff3f9"></div>
<div style="position:absolute;left:0.00px;top:27.03px;width:666.40px;height:13.52px;background:#ffffff"></div>
<div style="position:absolute;left:0.00px;top:40.55px;width:666.40px;height:13.52px;background:#eff3f9"></div>
<div style="position:absolute;left:0.00px;top:54.07px;width:666.40px;height:13.52px;background:#ffffff"></div>
<div style="position:absolute;left:0.00px;top:67.58px;width:666.40px;height:13.52px;background:#eff3f9"></div>
<div style="position:absolute;left:0.00px;top:81.10px;width:666.40px;height:13.52px;background:#ffffff"></div>
<div style="position:absolute;left:0.00px;top:94.62px;width:666.40px;height:13.52px;background:#eff3f9"></div>
<div style="position:absolute;left:0.00px;top:108.14px;width:666.40px;height:13.52px;background:#ffffff"></div>
<div style="position:absolute;left:0.00px;top:121.65px;width:666.40px;height:13.52px;background:#eff3f9"></div>
<div style="position:absolute;left:0.00px;top:135.17px;width:666.40px;height:13.52px;background:#ffffff"></div>
<div style="position:absolute;left:0.00px;top:148.69px;width:666.40px;height:13.52px;background:#eff3f9"></div>
<div style="position:absolute;left:0.00px;top:162.20px;width:666.40px;height:13.52px;background:#ffffff"></div>
<div style="position:absolute;left:0.00px;top:175.72px;width:666.40px;height:13.52px;background:#eff3f9"></div>
<div style="position:absolute;left:0.00px;top:189.24px;width:666.40px;height:13.52px;background:#ffffff"></div>
<div style="position:absolute;left:0.00px;top:202.75px;width:666.40px;height:13.52px;background:#d0d0d0"></div>
<div style="position:absolute;left:0.00px;top:216.27px;width:666.40px;height:13.52px;background:#ffffff"></div>
<div style="position:absolute;left:0.00px;top:229.79px;width:666.40px;height:13.52px;background:#eff3f9"></div>
<div style="position:absolute;left:0.00px;top:243.31px;width:666.40px;height:13.52px;background:#ffffff"></div>
<div style="position:absolute;left:0.00px;top:256.82px;width:666.40px;height:13.52px;background:#eff3f9"></div>
<div style="position:absolute;left:0.00px;top:270.34px;width:666.40px;height:13.52px;background:#ffffff"></div>
<div style="position:absolute;left:0.00px;top:283.86px;width:666.40px;height:13.52px;background:#eff3f9"></div>
<div style="position:absolute;left:0.00px;top:297.37px;width:666.40px;height:13.52px;background:#ffffff"></div>
<div style="position:absolute;left:0.00px;top:310.89px;width:666.40px;height:13.52px;background:#eff3f9"></div>
<div style="position:absolute;left:0.00px;top:324.41px;width:666.40px;height:13.52px;background:#ffffff"></div>
<div style="position:absolute;left:0.00px;top:337.93px;width:666.40px;height:13.52px;background:#eff3f9"></div>
<div style="position:absolute;left:0.00px;top:351.44px;width:666.40px;height:13.52px;background:#ffffff"></div>
<div style="position:absolute;left:0.00px;top:364.96px;width:666.40px;height:13.52px;background:#eff3f9"></div>
<div style="position:absolute;left:0.00px;top:378.48px;width:666.40px;height:13.52px;background:#ffffff"></div>
<div style="position:absolute;left:0.00px;top:391.99px;width:666.40px;height:13.52px;background:#eff3f9"></div>
<div style="position:absolute;left:0.00px;top:405.51px;width:666.40px;height:13.52px;background:#ffffff"></div>
<div style="position:absolute;left:0.00px;top:12.76px;width:666.40px;height:1.00px;background:#dcdcdc"></div>
<div style="position:absolute;left:0.00px;top:26.76px;width:666.40px;height:1.00px;background:#dcdcdc"></div>
<div style="position:absolute;left:0.00px;top:39.76px;width:666.40px;height:1.00px;background:#dcdcdc"></div>
<div style="position:absolute;left:0.00px;top:53.76px;width:666.40px;height:1.00px;background:#dcdcdc"></div>
<div style="position:absolute;left:0.00px;top:66.76px;width:666.40px;height:1.00px;background:#dcdcdc"></div>
<div style="position:absolute;left:0.00px;top:80.76px;width:666.40px;height:1.00px;background:#dcdcdc"></div>
<div style="position:absolute;left:0.00px;top:93.76px;width:666.40px;height:1.00px;background:#dcdcdc"></div>
<div style="position:absolute;left:0.00px;top:107.76px;width:666.40px;height:1.00px;background:#dcdcdc"></div>
<div style="position:absolute;left:0.00px;top:120.76px;width:666.40px;height:1.00px;background:#dcdcdc"></div>
<div style="position:absolute;left:0.00px;top:134.76px;width:666.40px;height:1.00px;background:#dcdcdc"></div>
<div style="position:absolute;left:0.00px;top:147.76px;width:666.40px;height:1.00px;background:#dcdcdc"></div>
<div style="position:absolute;left:0.00px;top:161.76px;width:666.40px;height:1.00px;background:#dcdcdc"></div>
<div style="position:absolute;left:0.00px;top:174.76px;width:666.40px;height:1.00px;background:#dcdcdc"></div>
<div style="position:absolute;left:0.00px;top:188.76px;width:666.40px;height:1.00px;background:#dcdcdc"></div>
<div style="position:absolute;left:0.00px;top:201.76px;width:666.40px;height:1.00px;background:#dcdcdc"></div>
<div style="position:absolute;left:0.00px;top:215.76px;width:666.40px;height:1.00px;background:#dcdcdc"></div>
<div style="position:absolute;left:0.00px;top:229.76px;width:666.40px;height:1.00px;background:#dcdcdc"></div>
<div style="position:absolute;left:0.00px;top:242.76px;width:666.40px;height:1.00px;background:#dcdcdc"></div>
<div style="position:absolute;left:0.00px;top:256.76px;width:666.40px;height:1.00px;background:#dcdcdc"></div>
<div style="position:absolute;left:0.00px;top:269.76px;width:666.40px;height:1.00px;background:#dcdcdc"></div>
<div style="position:absolute;left:0.00px;top:283.76px;width:666.40px;height:1.00px;background:#dcdcdc"></div>
<div style="position:absolute;left:0.00px;top:296.76px;width:666.40px;height:1.00px;background:#dcdcdc"></div>
<div style="position:absolute;left:0.00px;top:310.76px;width:666.40px;height:1.00px;background:#dcdcdc"></div>
<div style="position:absolute;left:0.00px;top:323.76px;width:666.40px;height:1.00px;background:#dcdcdc"></div>
<div style="position:absolute;left:0.00px;top:337.76px;width:666.40px;height:1.00px;background:#dcdcdc"></div>
<div style="position:absolute;left:0.00px;top:350.76px;width:666.40px;height:1.00px;background:#dcdcdc"></div>
<div style="position:absolute;left:0.00px;top:364.76px;width:666.40px;height:1.00px;background:#dcdcdc"></div>
<div style="position:absolute;left:0.00px;top:377.76px;width:666.40px;height:1.00px;background:#dcdcdc"></div>
<div style="position:absolute;left:0.00px;top:391.76px;width:666.40px;height:1.00px;background:#dcdcdc"></div>
<div style="position:absolute;left:0.00px;top:404.76px;width:666.40px;height:1.00px;background:#dcdcdc"></div>
<div style="position:absolute;left:0.00px;top:418.76px;width:666.40px;height:1.00px;background:#dcdcdc"></div>
</div></div>
<div style="position:absolute;top:85.20px;height:20px;line-height:20px;font-size:7.4px;color:#33d3ee;font-weight:normal;font-style:normal;white-space:nowrap;letter-spacing:0.45px;font-family:'Liberation Sans', sans-serif;text-shadow:0.28px 0 0 #33d3ee;left:200.00px;width:60px;text-align:center">4/16/13</div>
<div style="position:absolute;top:85.20px;height:20px;line-height:20px;font-size:7.3px;color:#f0a03c;font-weight:normal;font-style:italic;white-space:nowrap;letter-spacing:0.12px;font-family:'Liberation Sans', sans-serif;text-shadow:0.28px 0 0 #f0a03c;left:315.00px">Weekly Recu</div>
<div style="position:absolute;top:85.20px;height:20px;line-height:20px;font-size:7.3px;color:#1a1a1a;font-weight:normal;font-style:normal;white-space:nowrap;letter-spacing:0.22px;font-family:'Liberation Sans', sans-serif;text-shadow:0.28px 0 0 #1a1a1a;left:461.00px">Misc</div>
<svg style="position:absolute;left:447.00px;top:89.40px" width="10" height="11" viewBox="0 0 10 11"><text x="5" y="10" font-size="12" font-family="Liberation Sans" font-weight="bold" text-anchor="middle" fill="#4a95cc">?</text></svg>
<div style="position:absolute;top:85.20px;height:20px;line-height:20px;font-size:7.3px;color:#7d7d7d;font-weight:normal;font-style:normal;white-space:nowrap;letter-spacing:0.3px;font-family:'Liberation Sans', sans-serif;text-shadow:0.28px 0 0 #7d7d7d;left:690.50px;width:80px;text-align:right">-$10.00</div>
<div style="position:absolute;top:85.20px;height:20px;line-height:20px;font-size:7.3px;color:#1a1a1a;font-weight:normal;font-style:normal;white-space:nowrap;letter-spacing:0.23px;font-family:'Liberation Sans', sans-serif;text-shadow:0.28px 0 0 #1a1a1a;left:767.50px;width:80px;text-align:right">$5583.41</div>
<div style="position:absolute;top:98.72px;height:20px;line-height:20px;font-size:7.4px;color:#e23b4e;font-weight:normal;font-style:normal;white-space:nowrap;letter-spacing:0.45px;font-family:'Liberation Sans', sans-serif;text-shadow:0.28px 0 0 #e23b4e;left:200.00px;width:60px;text-align:center">3/16/13</div>
<div style="position:absolute;top:98.72px;height:20px;line-height:20px;font-size:7.3px;color:#f0a03c;font-weight:normal;font-style:italic;white-space:nowrap;letter-spacing:0.12px;font-family:'Liberation Sans', sans-serif;text-shadow:0.28px 0 0 #f0a03c;left:315.00px">Weekly Recu</div>
<div style="position:absolute;top:98.72px;height:20px;line-height:20px;font-size:7.3px;color:#1a1a1a;font-weight:normal;font-style:normal;white-space:nowrap;letter-spacing:0.22px;font-family:'Liberation Sans', sans-serif;text-shadow:0.28px 0 0 #1a1a1a;left:461.00px">Misc</div>
<svg style="position:absolute;left:447.00px;top:102.92px" width="10" height="11" viewBox="0 0 10 11"><text x="5" y="10" font-size="12" font-family="Liberation Sans" font-weight="bold" text-anchor="middle" fill="#4a95cc">?</text></svg>
<div style="position:absolute;top:98.72px;height:20px;line-height:20px;font-size:7.3px;color:#7d7d7d;font-weight:normal;font-style:normal;white-space:nowrap;letter-spacing:0.3px;font-family:'Liberation Sans', sans-serif;text-shadow:0.28px 0 0 #7d7d7d;left:690.50px;width:80px;text-align:right">-$10.00</div>
<div style="position:absolute;top:98.72px;height:20px;line-height:20px;font-size:7.3px;color:#1a1a1a;font-weight:normal;font-style:normal;white-space:nowrap;letter-spacing:0.23px;font-family:'Liberation Sans', sans-serif;text-shadow:0.28px 0 0 #1a1a1a;left:767.50px;width:80px;text-align:right">$5583.41</div>
<div style="position:absolute;top:112.23px;height:20px;line-height:20px;font-size:7.4px;color:#1a1a1a;font-weight:normal;font-style:normal;white-space:nowrap;letter-spacing:0.45px;font-family:'Liberation Sans', sans-serif;text-shadow:0.28px 0 0 #1a1a1a;left:200.00px;width:60px;text-align:center">2/10/13</div>
<div style="position:absolute;top:112.23px;height:20px;line-height:20px;font-size:7.3px;color:#2f5fd6;font-weight:normal;font-style:normal;white-space:nowrap;letter-spacing:0.12px;font-family:'Liberation Sans', sans-serif;text-shadow:0.28px 0 0 #2f5fd6;left:315.00px">Transfer</div>
<div style="position:absolute;top:112.23px;height:20px;line-height:20px;font-size:7.3px;color:#2f5fd6;font-weight:normal;font-style:normal;white-space:nowrap;letter-spacing:0.22px;font-family:'Liberation Sans', sans-serif;text-shadow:0.28px 0 0 #2f5fd6;left:461.00px">Transfer</div>
<svg style="position:absolute;left:447.00px;top:116.93px" width="10" height="10" viewBox="0 0 10 10">
<path d="M1.5 4.2 Q1.5 1.6 4.5 1.6 H7.2" stroke="#f3b81c" stroke-width="2" fill="none"/>
<path d="M6.5 -0.2 L9.5 1.8 L6.5 3.8 Z" fill="#f3b81c"/>
<path d="M8.5 5.8 Q8.5 8.4 5.5 8.4 H2.8" stroke="#f3b81c" stroke-width="2" fill="none"/>
<path d="M3.5 6.2 L0.5 8.2 L3.5 10.2 Z" fill="#f3b81c"/>
</svg>
<div style="position:absolute;left:693.30px;top:120.00px;width:3.20px;height:2.00px;background:#2a2a2a"></div>
<div style="position:absolute;top:112.23px;height:20px;line-height:20px;font-size:7.3px;color:#2f5fd6;font-weight:normal;font-style:normal;white-space:nowrap;letter-spacing:0.3px;font-family:'Liberation Sans', sans-serif;text-shadow:0.28px 0 0 #2f5fd6;left:690.50px;width:80px;text-align:right">$123.00</div>
<div style="position:absolute;top:112.23px;height:20px;line-height:20px;font-size:7.3px;color:#1a1a1a;font-weight:normal;font-style:normal;white-space:nowrap;letter-spacing:0.23px;font-family:'Liberation Sans', sans-serif;text-shadow:0.28px 0 0 #1a1a1a;left:767.50px;width:80px;text-align:right">$5583.41</div>
<div style="position:absolute;top:125.75px;height:20px;line-height:20px;font-size:7.4px;color:#1a1a1a;font-weight:normal;font-style:normal;white-space:nowrap;letter-spacing:0.45px;font-family:'Liberation Sans', sans-serif;text-shadow:0.28px 0 0 #1a1a1a;left:200.00px;width:60px;text-align:center">12/27/12</div>
<div style="position:absolute;top:125.75px;height:20px;line-height:20px;font-size:7.3px;color:#1a1a1a;font-weight:normal;font-style:normal;white-space:nowrap;letter-spacing:0.12px;font-family:'Liberation Sans', sans-serif;text-shadow:0.28px 0 0 #1a1a1a;left:315.00px">Test</div>
<div style="position:absolute;top:125.75px;height:20px;line-height:20px;font-size:7.3px;color:#1a1a1a;font-weight:normal;font-style:normal;white-space:nowrap;letter-spacing:0.22px;font-family:'Liberation Sans', sans-serif;text-shadow:0.28px 0 0 #1a1a1a;left:461.00px">Insurance</div>
<svg style="position:absolute;left:447.00px;top:130.45px" width="10" height="10" viewBox="0 0 10 10">
<path d="M0.6 5.2 Q5 -0.8 9.4 5.2 Z" fill="#e5482c"/>
<path d="M3.6 5.2 Q5 0.6 6.4 5.2 Z" fill="#f7e6c8"/>
<path d="M5 5 V9" stroke="#666" stroke-width="0.7"/>
</svg>
<div style="position:absolute;left:693.30px;top:133.00px;width:3.20px;height:2.00px;background:#2a2a2a"></div>
<div style="position:absolute;top:125.75px;height:20px;line-height:20px;font-size:7.3px;color:#2f5fd6;font-weight:normal;font-style:normal;white-space:nowrap;letter-spacing:0.3px;font-family:'Liberation Sans', sans-serif;text-shadow:0.28px 0 0 #2f5fd6;left:690.50px;width:80px;text-align:right">$30.00</div>
<div style="position:absolute;top:125.75px;height:20px;line-height:20px;font-size:7.3px;color:#1a1a1a;font-weight:normal;font-style:normal;white-space:nowrap;letter-spacing:0.23px;font-family:'Liberation Sans', sans-serif;text-shadow:0.28px 0 0 #1a1a1a;left:767.50px;width:80px;text-align:right">$5460.41</div>
<div style="position:absolute;top:139.27px;height:20px;line-height:20px;font-size:7.4px;color:#1a1a1a;font-weight:normal;font-style:normal;white-space:nowrap;letter-spacing:0.45px;font-family:'Liberation Sans', sans-serif;text-shadow:0.28px 0 0 #1a1a1a;left:200.00px;width:60px;text-align:center">9/26/12</div>
<div style="position:absolute;top:139.27px;height:20px;line-height:20px;font-size:7.3px;color:#1a1a1a;font-weight:normal;font-style:normal;white-space:nowrap;letter-spacing:0.12px;font-family:'Liberation Sans', sans-serif;text-shadow:0.28px 0 0 #1a1a1a;left:315.00px">Winder Dairy</div>
<div style="position:absolute;top:139.27px;height:20px;line-height:20px;font-size:7.3px;color:#1a1a1a;font-weight:normal;font-style:normal;white-space:nowrap;letter-spacing:0.22px;font-family:'Liberation Sans', sans-serif;text-shadow:0.28px 0 0 #1a1a1a;left:461.00px">Groceries: Winder</div>
<svg style="position:absolute;left:447.50px;top:143.47px" width="9" height="11" viewBox="0 0 9 11">
<rect x="1" y="2.5" width="7" height="8" rx="1" fill="#33b02a"/>
<rect x="1.5" y="0.6" width="6" height="2.5" fill="#4a4a30"/>
<rect x="2" y="3.5" width="5" height="2" fill="#8fe07a"/>
<circle cx="4.5" cy="7.2" r="1.2" fill="#a6f090"/>
</svg>
<div style="position:absolute;left:693.30px;top:147.00px;width:3.20px;height:2.00px;background:#2a2a2a"></div>
<div style="position:absolute;top:139.27px;height:20px;line-height:20px;font-size:7.3px;color:#1a1a1a;font-weight:normal;font-style:normal;white-space:nowrap;letter-spacing:0.3px;font-family:'Liberation Sans', sans-serif;text-shadow:0.28px 0 0 #1a1a1a;left:690.50px;width:80px;text-align:right">-$13.26</div>
<div style="position:absolute;top:139.27px;height:20px;line-height:20px;font-size:7.3px;color:#1a1a1a;font-weight:normal;font-style:normal;white-space:nowrap;letter-spacing:0.23px;font-family:'Liberation Sans', sans-serif;text-shadow:0.28px 0 0 #1a1a1a;left:767.50px;width:80px;text-align:right">$5430.41</div>
<div style="position:absolute;top:152.78px;height:20px;line-height:20px;font-size:7.4px;color:#1a1a1a;font-weight:normal;font-style:normal;white-space:nowrap;letter-spacing:0.45px;font-family:'Liberation Sans', sans-serif;text-shadow:0.28px 0 0 #1a1a1a;left:200.00px;width:60px;text-align:center">9/24/12</div>
<div style="position:absolute;top:152.78px;height:20px;line-height:20px;font-size:7.3px;color:#1a1a1a;font-weight:normal;font-style:normal;white-space:nowrap;letter-spacing:0.12px;font-family:'Liberation Sans', sans-serif;text-shadow:0.28px 0 0 #1a1a1a;left:315.00px">Amazon</div>
<div style="position:absolute;top:152.78px;height:20px;line-height:20px;font-size:7.3px;color:#1a1a1a;font-weight:normal;font-style:normal;white-space:nowrap;letter-spacing:0.22px;font-family:'Liberation Sans', sans-serif;text-shadow:0.28px 0 0 #1a1a1a;left:461.00px">Gifts Given: Birthday</div>
<svg style="position:absolute;left:447.50px;top:157.48px" width="9" height="10" viewBox="0 0 9 10">
<rect x="1" y="3" width="7" height="6.5" fill="#f0e8e8" stroke="#b03030" stroke-width="0.6"/>
<rect x="1" y="3" width="7" height="2" fill="#c43a3a"/>
<rect x="4" y="3" width="1.2" height="6.5" fill="#c43a3a"/>
<path d="M2.5 0.8 Q4.5 1.5 4.5 3 Q4.5 1.5 6.5 0.8" stroke="#c43a3a" stroke-width="0.9" fill="none"/>
</svg>
<div style="position:absolute;top:152.78px;height:20px;line-height:20px;font-size:7.5px;color:#1a1a1a;font-weight:normal;font-style:italic;white-space:nowrap;letter-spacing:0.05px;font-family:'Liberation Sans', sans-serif;text-shadow:0.28px 0 0 #1a1a1a;left:571.50px">Josh $25 from mom</div>
<div style="position:absolute;left:693.30px;top:160.00px;width:3.20px;height:2.00px;background:#2a2a2a"></div>
<div style="position:absolute;top:152.78px;height:20px;line-height:20px;font-size:7.3px;color:#1a1a1a;font-weight:normal;font-style:normal;white-space:nowrap;letter-spacing:0.3px;font-family:'Liberation Sans', sans-serif;text-shadow:0.28px 0 0 #1a1a1a;left:690.50px;width:80px;text-align:right">-$50.00</div>
<div style="position:absolute;top:152.78px;height:20px;line-height:20px;font-size:7.3px;color:#1a1a1a;font-weight:normal;font-style:normal;white-space:nowrap;letter-spacing:0.23px;font-family:'Liberation Sans', sans-serif;text-shadow:0.28px 0 0 #1a1a1a;left:767.50px;width:80px;text-align:right">$5443.67</div>
<div style="position:absolute;top:166.30px;height:20px;line-height:20px;font-size:7.4px;color:#1a1a1a;font-weight:normal;font-style:normal;white-space:nowrap;letter-spacing:0.45px;font-family:'Liberation Sans', sans-serif;text-shadow:0.28px 0 0 #1a1a1a;left:200.00px;width:60px;text-align:center">9/17/12</div>
<div style="position:absolute;top:166.30px;height:20px;line-height:20px;font-size:7.3px;color:#1a1a1a;font-weight:normal;font-style:normal;white-space:nowrap;letter-spacing:0.12px;font-family:'Liberation Sans', sans-serif;text-shadow:0.28px 0 0 #1a1a1a;left:315.00px">Chevron</div>
<div style="position:absolute;top:166.30px;height:20px;line-height:20px;font-size:7.3px;color:#1a1a1a;font-weight:normal;font-style:normal;white-space:nowrap;letter-spacing:0.22px;font-family:'Liberation Sans', sans-serif;text-shadow:0.28px 0 0 #1a1a1a;left:461.00px">Auto: Gasoline</div>
<svg style="position:absolute;left:446.50px;top:170.50px" width="11" height="11" viewBox="0 0 11 11">
<rect x="1" y="0.8" width="6" height="9.5" rx="0.8" fill="#b82424"/>
<rect x="2" y="2" width="4" height="2.8" fill="#f0d0d0"/>
<path d="M7 3 L9 5 V8.5 Q9 10 10 9.5" stroke="#555" stroke-width="0.7" fill="none"/>
<rect x="0.5" y="9.8" width="7" height="0.8" fill="#555"/>
</svg>
<div style="position:absolute;left:693.30px;top:174.00px;width:3.20px;height:2.00px;background:#2a2a2a"></div>
<div style="position:absolute;top:166.30px;height:20px;line-height:20px;font-size:7.3px;color:#1a1a1a;font-weight:normal;font-style:normal;white-space:nowrap;letter-spacing:0.3px;font-family:'Liberation Sans', sans-serif;text-shadow:0.28px 0 0 #1a1a1a;left:690.50px;width:80px;text-align:right">-$8.03</div>
<div style="position:absolute;top:166.30px;height:20px;line-height:20px;font-size:7.3px;color:#1a1a1a;font-weight:normal;font-style:normal;white-space:nowrap;letter-spacing:0.23px;font-family:'Liberation Sans', sans-serif;text-shadow:0.28px 0 0 #1a1a1a;left:767.50px;width:80px;text-align:right">$5493.67</div>
<div style="position:absolute;top:179.82px;height:20px;line-height:20px;font-size:7.4px;color:#1a1a1a;font-weight:normal;font-style:normal;white-space:nowrap;letter-spacing:0.45px;font-family:'Liberation Sans', sans-serif;text-shadow:0.28px 0 0 #1a1a1a;left:200.00px;width:60px;text-align:center">9/14/12</div>
<div style="position:absolute;top:179.82px;height:20px;line-height:20px;font-size:7.3px;color:#1a1a1a;font-weight:normal;font-style:normal;white-space:nowrap;letter-spacing:0.12px;font-family:'Liberation Sans', sans-serif;text-shadow:0.28px 0 0 #1a1a1a;left:315.00px">Verizon Wireless</div>
<div style="position:absolute;top:179.82px;height:20px;line-height:20px;font-size:7.3px;color:#1a1a1a;font-weight:normal;font-style:normal;white-space:nowrap;letter-spacing:0.22px;font-family:'Liberation Sans', sans-serif;text-shadow:0.28px 0 0 #1a1a1a;left:461.00px">Bills: Cell Phone</div>
<svg style="position:absolute;left:446.50px;top:184.52px" width="11" height="10" viewBox="0 0 11 10">
<g transform="rotate(-40 5.5 5)"><rect x="3" y="-0.5" width="5" height="11" rx="1" fill="#5f6f86"/><rect x="3.8" y="1.2" width="3.4" height="5" fill="#b8d0ea"/></g>
</svg>
<div style="position:absolute;left:693.30px;top:188.00px;width:3.20px;height:2.00px;background:#2a2a2a"></div>
<div style="position:absolute;top:179.82px;height:20px;line-height:20px;font-size:7.3px;color:#2f5fd6;font-weight:normal;font-style:normal;white-space:nowrap;letter-spacing:0.3px;font-family:'Liberation Sans', sans-serif;text-shadow:0.28px 0 0 #2f5fd6;left:690.50px;width:80px;text-align:right">$284.28</div>
<div style="position:absolute;top:179.82px;height:20px;line-height:20px;font-size:7.3px;color:#1a1a1a;font-weight:normal;font-style:normal;white-space:nowrap;letter-spacing:0.23px;font-family:'Liberation Sans', sans-serif;text-shadow:0.28px 0 0 #1a1a1a;left:767.50px;width:80px;text-align:right">$5501.70</div>
<div style="position:absolute;top:193.33px;height:20px;line-height:20px;font-size:7.4px;color:#1a1a1a;font-weight:normal;font-style:normal;white-space:nowrap;letter-spacing:0.45px;font-family:'Liberation Sans', sans-serif;text-shadow:0.28px 0 0 #1a1a1a;left:200.00px;width:60px;text-align:center">9/11/12</div>
<div style="position:absolute;top:193.33px;height:20px;line-height:20px;font-size:7.3px;color:#1a1a1a;font-weight:normal;font-style:normal;white-space:nowrap;letter-spacing:0.12px;font-family:'Liberation Sans', sans-serif;text-shadow:0.28px 0 0 #1a1a1a;left:315.00px">Viva Mercados</div>
<svg style="position:absolute;left:447.00px;top:198.03px" width="10" height="10" viewBox="0 0 10 10">
<circle cx="5" cy="5" r="4.6" fill="#2f6fd0"/>
<path d="M3.5 2 V8 M6.5 2 V8 M2.8 2 V4 Q3.5 5 4.2 4 V2" stroke="#fff" stroke-width="0.8" fill="none"/>
</svg>
<div style="position:absolute;left:693.30px;top:201.00px;width:3.20px;height:2.00px;background:#2a2a2a"></div>
<div style="position:absolute;top:193.33px;height:20px;line-height:20px;font-size:7.3px;color:#1a1a1a;font-weight:normal;font-style:normal;white-space:nowrap;letter-spacing:0.3px;font-family:'Liberation Sans', sans-serif;text-shadow:0.28px 0 0 #1a1a1a;left:690.50px;width:80px;text-align:right">-$53.40</div>
<div style="position:absolute;top:193.33px;height:20px;line-height:20px;font-size:7.3px;color:#1a1a1a;font-weight:normal;font-style:normal;white-space:nowrap;letter-spacing:0.23px;font-family:'Liberation Sans', sans-serif;text-shadow:0.28px 0 0 #1a1a1a;left:767.50px;width:80px;text-align:right">$5217.42</div>
<div style="position:absolute;top:206.85px;height:20px;line-height:20px;font-size:7.4px;color:#1a1a1a;font-weight:normal;font-style:normal;white-space:nowrap;letter-spacing:0.45px;font-family:'Liberation Sans', sans-serif;text-shadow:0.28px 0 0 #1a1a1a;left:200.00px;width:60px;text-align:center">9/7/12</div>
<div style="position:absolute;top:206.85px;height:20px;line-height:20px;font-size:7.3px;color:#1a1a1a;font-weight:normal;font-style:normal;white-space:nowrap;letter-spacing:0.12px;font-family:'Liberation Sans', sans-serif;text-shadow:0.28px 0 0 #1a1a1a;left:315.00px">Rent</div>
<div style="position:absolute;left:693.30px;top:215.00px;width:3.20px;height:2.00px;background:#2a2a2a"></div>
<div style="position:absolute;top:206.85px;height:20px;line-height:20px;font-size:7.3px;color:#1a1a1a;font-weight:normal;font-style:normal;white-space:nowrap;letter-spacing:0.3px;font-family:'Liberation Sans', sans-serif;text-shadow:0.28px 0 0 #1a1a1a;left:690.50px;width:80px;text-align:right">-$995.00</div>
<div style="position:absolute;top:206.85px;height:20px;line-height:20px;font-size:7.3px;color:#1a1a1a;font-weight:normal;font-style:normal;white-space:nowrap;letter-spacing:0.23px;font-family:'Liberation Sans', sans-serif;text-shadow:0.28px 0 0 #1a1a1a;left:767.50px;width:80px;text-align:right">$5270.82</div>
<div style="position:absolute;top:220.37px;height:20px;line-height:20px;font-size:7.4px;color:#1a1a1a;font-weight:normal;font-style:normal;white-space:nowrap;letter-spacing:0.45px;font-family:'Liberation Sans', sans-serif;text-shadow:0.28px 0 0 #1a1a1a;left:200.00px;width:60px;text-align:center">9/7/12</div>
<div style="position:absolute;top:220.37px;height:20px;line-height:20px;font-size:7.3px;color:#1a1a1a;font-weight:normal;font-style:normal;white-space:nowrap;letter-spacing:0.12px;font-family:'Liberation Sans', sans-serif;text-shadow:0.28px 0 0 #1a1a1a;left:315.00px">NewEgg</div>
<div style="position:absolute;left:693.30px;top:228.00px;width:3.20px;height:2.00px;background:#2a2a2a"></div>
<div style="position:absolute;top:220.37px;height:20px;line-height:20px;font-size:7.3px;color:#1a1a1a;font-weight:normal;font-style:normal;white-space:nowrap;letter-spacing:0.3px;font-family:'Liberation Sans', sans-serif;text-shadow:0.28px 0 0 #1a1a1a;left:690.50px;width:80px;text-align:right">-$42.99</div>
<div style="position:absolute;top:220.37px;height:20px;line-height:20px;font-size:7.3px;color:#1a1a1a;font-weight:normal;font-style:normal;white-space:nowrap;letter-spacing:0.23px;font-family:'Liberation Sans', sans-serif;text-shadow:0.28px 0 0 #1a1a1a;left:767.50px;width:80px;text-align:right">$6265.82</div>
<div style="position:absolute;top:233.89px;height:20px;line-height:20px;font-size:7.4px;color:#1a1a1a;font-weight:normal;font-style:normal;white-space:nowrap;letter-spacing:0.45px;font-family:'Liberation Sans', sans-serif;text-shadow:0.28px 0 0 #1a1a1a;left:200.00px;width:60px;text-align:center">9/6/12</div>
<div style="position:absolute;top:233.89px;height:20px;line-height:20px;font-size:7.3px;color:#1a1a1a;font-weight:normal;font-style:normal;white-space:nowrap;letter-spacing:0.12px;font-family:'Liberation Sans', sans-serif;text-shadow:0.28px 0 0 #1a1a1a;left:315.00px">Netflix</div>
<div style="position:absolute;left:693.30px;top:242.00px;width:3.20px;height:2.00px;background:#2a2a2a"></div>
<div style="position:absolute;top:233.89px;height:20px;line-height:20px;font-size:7.3px;color:#1a1a1a;font-weight:normal;font-style:normal;white-space:nowrap;letter-spacing:0.3px;font-family:'Liberation Sans', sans-serif;text-shadow:0.28px 0 0 #1a1a1a;left:690.50px;width:80px;text-align:right">-$2.40</div>
<div style="position:absolute;top:233.89px;height:20px;line-height:20px;font-size:7.3px;color:#1a1a1a;font-weight:normal;font-style:normal;white-space:nowrap;letter-spacing:0.23px;font-family:'Liberation Sans', sans-serif;text-shadow:0.28px 0 0 #1a1a1a;left:767.50px;width:80px;text-align:right">$6308.81</div>
<div style="position:absolute;top:247.40px;height:20px;line-height:20px;font-size:7.4px;color:#1a1a1a;font-weight:normal;font-style:normal;white-space:nowrap;letter-spacing:0.45px;font-family:'Liberation Sans', sans-serif;text-shadow:0.28px 0 0 #1a1a1a;left:200.00px;width:60px;text-align:center">9/6/12</div>
<div style="position:absolute;top:247.40px;height:20px;line-height:20px;font-size:7.3px;color:#1a1a1a;font-weight:normal;font-style:normal;white-space:nowrap;letter-spacing:0.12px;font-family:'Liberation Sans', sans-serif;text-shadow:0.28px 0 0 #1a1a1a;left:315.00px">Apple</div>
<div style="position:absolute;left:693.30px;top:255.00px;width:3.20px;height:2.00px;background:#2a2a2a"></div>
<div style="position:absolute;top:247.40px;height:20px;line-height:20px;font-size:7.3px;color:#2f5fd6;font-weight:normal;font-style:normal;white-space:nowrap;letter-spacing:0.3px;font-family:'Liberation Sans', sans-serif;text-shadow:0.28px 0 0 #2f5fd6;left:690.50px;width:80px;text-align:right">$1598.08</div>
<div style="position:absolute;top:247.40px;height:20px;line-height:20px;font-size:7.3px;color:#1a1a1a;font-weight:normal;font-style:normal;white-space:nowrap;letter-spacing:0.23px;font-family:'Liberation Sans', sans-serif;text-shadow:0.28px 0 0 #1a1a1a;left:767.50px;width:80px;text-align:right">$6311.21</div>
<div style="position:absolute;top:260.92px;height:20px;line-height:20px;font-size:7.4px;color:#1a1a1a;font-weight:normal;font-style:normal;white-space:nowrap;letter-spacing:0.45px;font-family:'Liberation Sans', sans-serif;text-shadow:0.28px 0 0 #1a1a1a;left:200.00px;width:60px;text-align:center">9/5/12</div>
<div style="position:absolute;top:260.92px;height:20px;line-height:20px;font-size:7.3px;color:#1a1a1a;font-weight:normal;font-style:normal;white-space:nowrap;letter-spacing:0.1px;font-family:'Liberation Sans', sans-serif;text-shadow:0.28px 0 0 #1a1a1a;left:269.00px;width:40px;text-align:center">XFER</div>
<div style="position:absolute;top:260.92px;height:20px;line-height:20px;font-size:7.3px;color:#1a1a1a;font-weight:normal;font-style:normal;white-space:nowrap;letter-spacing:0.12px;font-family:'Liberation Sans', sans-serif;text-shadow:0.28px 0 0 #1a1a1a;left:315.00px">Transfer</div>
<div style="position:absolute;left:693.30px;top:269.00px;width:3.20px;height:2.00px;background:#2a2a2a"></div>
<div style="position:absolute;top:260.92px;height:20px;line-height:20px;font-size:7.3px;color:#2f5fd6;font-weight:normal;font-style:normal;white-space:nowrap;letter-spacing:0.3px;font-family:'Liberation Sans', sans-serif;text-shadow:0.28px 0 0 #2f5fd6;left:690.50px;width:80px;text-align:right">$800.00</div>
<div style="position:absolute;top:260.92px;height:20px;line-height:20px;font-size:7.3px;color:#1a1a1a;font-weight:normal;font-style:normal;white-space:nowrap;letter-spacing:0.23px;font-family:'Liberation Sans', sans-serif;text-shadow:0.28px 0 0 #1a1a1a;left:767.50px;width:80px;text-align:right">$4713.13</div>
<div style="position:absolute;top:274.44px;height:20px;line-height:20px;font-size:7.4px;color:#1a1a1a;font-weight:normal;font-style:normal;white-space:nowrap;letter-spacing:0.45px;font-family:'Liberation Sans', sans-serif;text-shadow:0.28px 0 0 #1a1a1a;left:200.00px;width:60px;text-align:center">9/4/12</div>
<div style="position:absolute;top:274.44px;height:20px;line-height:20px;font-size:7.3px;color:#1a1a1a;font-weight:normal;font-style:normal;white-space:nowrap;letter-spacing:0.1px;font-family:'Liberation Sans', sans-serif;text-shadow:0.28px 0 0 #1a1a1a;left:269.00px;width:40px;text-align:center">Auto</div>
<div style="position:absolute;top:274.44px;height:20px;line-height:20px;font-size:7.3px;color:#1a1a1a;font-weight:normal;font-style:normal;white-space:nowrap;letter-spacing:0.12px;font-family:'Liberation Sans', sans-serif;text-shadow:0.28px 0 0 #1a1a1a;left:315.00px">Block Buster</div>
<div style="position:absolute;left:693.30px;top:282.00px;width:3.20px;height:2.00px;background:#2a2a2a"></div>
<div style="position:absolute;top:274.44px;height:20px;line-height:20px;font-size:7.3px;color:#1a1a1a;font-weight:normal;font-style:normal;white-space:nowrap;letter-spacing:0.3px;font-family:'Liberation Sans', sans-serif;text-shadow:0.28px 0 0 #1a1a1a;left:690.50px;width:80px;text-align:right">-$12.96</div>
<div style="position:absolute;top:274.44px;height:20px;line-height:20px;font-size:7.3px;color:#1a1a1a;font-weight:normal;font-style:normal;white-space:nowrap;letter-spacing:0.23px;font-family:'Liberation Sans', sans-serif;text-shadow:0.28px 0 0 #1a1a1a;left:767.50px;width:80px;text-align:right">$3913.13</div>
<div style="position:absolute;top:287.95px;height:20px;line-height:20px;font-size:7.4px;color:#1a1a1a;font-weight:normal;font-style:normal;white-space:nowrap;letter-spacing:0.45px;font-family:'Liberation Sans', sans-serif;text-shadow:0.28px 0 0 #1a1a1a;left:200.00px;width:60px;text-align:center">8/31/12</div>
<div style="position:absolute;top:287.95px;height:20px;line-height:20px;font-size:7.3px;color:#1a1a1a;font-weight:normal;font-style:normal;white-space:nowrap;letter-spacing:0.12px;font-family:'Liberation Sans', sans-serif;text-shadow:0.28px 0 0 #1a1a1a;left:315.00px">Chicken Bonz</div>
<div style="position:absolute;left:693.30px;top:296.00px;width:3.20px;height:2.00px;background:#2a2a2a"></div>
<div style="position:absolute;top:287.95px;height:20px;line-height:20px;font-size:7.3px;color:#1a1a1a;font-weight:normal;font-style:normal;white-space:nowrap;letter-spacing:0.3px;font-family:'Liberation Sans', sans-serif;text-shadow:0.28px 0 0 #1a1a1a;left:690.50px;width:80px;text-align:right">-$23.77</div>
<div style="position:absolute;top:287.95px;height:20px;line-height:20px;font-size:7.3px;color:#1a1a1a;font-weight:normal;font-style:normal;white-space:nowrap;letter-spacing:0.23px;font-family:'Liberation Sans', sans-serif;text-shadow:0.28px 0 0 #1a1a1a;left:767.50px;width:80px;text-align:right">$3926.09</div>
<div style="position:absolute;top:301.47px;height:20px;line-height:20px;font-size:7.4px;color:#1a1a1a;font-weight:normal;font-style:normal;white-space:nowrap;letter-spacing:0.45px;font-family:'Liberation Sans', sans-serif;text-shadow:0.28px 0 0 #1a1a1a;left:200.00px;width:60px;text-align:center">8/27/12</div>
<div style="position:absolute;top:301.47px;height:20px;line-height:20px;font-size:7.3px;color:#1a1a1a;font-weight:normal;font-style:normal;white-space:nowrap;letter-spacing:0.12px;font-family:'Liberation Sans', sans-serif;text-shadow:0.28px 0 0 #1a1a1a;left:315.00px">Paypal (Misc)</div>
<div style="position:absolute;left:693.30px;top:309.00px;width:3.20px;height:2.00px;background:#2a2a2a"></div>
<div style="position:absolute;top:301.47px;height:20px;line-height:20px;font-size:7.3px;color:#1a1a1a;font-weight:normal;font-style:normal;white-space:nowrap;letter-spacing:0.3px;font-family:'Liberation Sans', sans-serif;text-shadow:0.28px 0 0 #1a1a1a;left:690.50px;width:80px;text-align:right">-$1.34</div>
<div style="position:absolute;top:301.47px;height:20px;line-height:20px;font-size:7.3px;color:#1a1a1a;font-weight:normal;font-style:normal;white-space:nowrap;letter-spacing:0.23px;font-family:'Liberation Sans', sans-serif;text-shadow:0.28px 0 0 #1a1a1a;left:767.50px;width:80px;text-align:right">$3949.86</div>
<div style="position:absolute;top:314.99px;height:20px;line-height:20px;font-size:7.4px;color:#1a1a1a;font-weight:normal;font-style:normal;white-space:nowrap;letter-spacing:0.45px;font-family:'Liberation Sans', sans-serif;text-shadow:0.28px 0 0 #1a1a1a;left:200.00px;width:60px;text-align:center">8/27/12</div>
<div style="position:absolute;top:314.99px;height:20px;line-height:20px;font-size:7.3px;color:#1a1a1a;font-weight:normal;font-style:normal;white-space:nowrap;letter-spacing:0.12px;font-family:'Liberation Sans', sans-serif;text-shadow:0.28px 0 0 #1a1a1a;left:315.00px">Apple (Itunes)</div>
<div style="position:absolute;left:693.30px;top:323.00px;width:3.20px;height:2.00px;background:#2a2a2a"></div>
<div style="position:absolute;top:314.99px;height:20px;line-height:20px;font-size:7.3px;color:#2f5fd6;font-weight:normal;font-style:normal;white-space:nowrap;letter-spacing:0.3px;font-family:'Liberation Sans', sans-serif;text-shadow:0.28px 0 0 #2f5fd6;left:690.50px;width:80px;text-align:right">$19.99</div>
<div style="position:absolute;top:314.99px;height:20px;line-height:20px;font-size:7.3px;color:#1a1a1a;font-weight:normal;font-style:normal;white-space:nowrap;letter-spacing:0.23px;font-family:'Liberation Sans', sans-serif;text-shadow:0.28px 0 0 #1a1a1a;left:767.50px;width:80px;text-align:right">$3951.20</div>
<div style="position:absolute;top:328.50px;height:20px;line-height:20px;font-size:7.4px;color:#1a1a1a;font-weight:normal;font-style:normal;white-space:nowrap;letter-spacing:0.45px;font-family:'Liberation Sans', sans-serif;text-shadow:0.28px 0 0 #1a1a1a;left:200.00px;width:60px;text-align:center">8/24/12</div>
<div style="position:absolute;top:328.50px;height:20px;line-height:20px;font-size:7.3px;color:#1a1a1a;font-weight:normal;font-style:normal;white-space:nowrap;letter-spacing:0.12px;font-family:'Liberation Sans', sans-serif;text-shadow:0.28px 0 0 #1a1a1a;left:315.00px">Apple (Itunes)</div>
<div style="position:absolute;top:328.50px;height:20px;line-height:20px;font-size:7.5px;color:#1a1a1a;font-weight:normal;font-style:italic;white-space:nowrap;letter-spacing:0.05px;font-family:'Liberation Sans', sans-serif;text-shadow:0.28px 0 0 #1a1a1a;left:571.50px">Refunded app (accidental)</div>
<div style="position:absolute;left:693.30px;top:336.00px;width:3.20px;height:2.00px;background:#2a2a2a"></div>
<div style="position:absolute;top:328.50px;height:20px;line-height:20px;font-size:7.3px;color:#1a1a1a;font-weight:normal;font-style:normal;white-space:nowrap;letter-spacing:0.3px;font-family:'Liberation Sans', sans-serif;text-shadow:0.28px 0 0 #1a1a1a;left:690.50px;width:80px;text-align:right">-$19.99</div>
<div style="position:absolute;top:328.50px;height:20px;line-height:20px;font-size:7.3px;color:#1a1a1a;font-weight:normal;font-style:normal;white-space:nowrap;letter-spacing:0.23px;font-family:'Liberation Sans', sans-serif;text-shadow:0.28px 0 0 #1a1a1a;left:767.50px;width:80px;text-align:right">$3931.21</div>
<div style="position:absolute;top:342.02px;height:20px;line-height:20px;font-size:7.4px;color:#1a1a1a;font-weight:normal;font-style:normal;white-space:nowrap;letter-spacing:0.45px;font-family:'Liberation Sans', sans-serif;text-shadow:0.28px 0 0 #1a1a1a;left:200.00px;width:60px;text-align:center">8/22/12</div>
<div style="position:absolute;top:342.02px;height:20px;line-height:20px;font-size:7.3px;color:#1a1a1a;font-weight:normal;font-style:normal;white-space:nowrap;letter-spacing:0.12px;font-family:'Liberation Sans', sans-serif;text-shadow:0.28px 0 0 #1a1a1a;left:315.00px">Winder Dairy</div>
<div style="position:absolute;top:342.02px;height:20px;line-height:20px;font-size:7.3px;color:#1a1a1a;font-weight:normal;font-style:normal;white-space:nowrap;letter-spacing:0.22px;font-family:'Liberation Sans', sans-serif;text-shadow:0.28px 0 0 #1a1a1a;left:461.00px">Groceries: Winder</div>
<svg style="position:absolute;left:447.50px;top:346.22px" width="9" height="11" viewBox="0 0 9 11">
<rect x="1" y="2.5" width="7" height="8" rx="1" fill="#33b02a"/>
<rect x="1.5" y="0.6" width="6" height="2.5" fill="#4a4a30"/>
<rect x="2" y="3.5" width="5" height="2" fill="#8fe07a"/>
<circle cx="4.5" cy="7.2" r="1.2" fill="#a6f090"/>
</svg>
<div style="position:absolute;left:693.30px;top:350.00px;width:3.20px;height:2.00px;background:#2a2a2a"></div>
<div style="position:absolute;top:342.02px;height:20px;line-height:20px;font-size:7.3px;color:#1a1a1a;font-weight:normal;font-style:normal;white-space:nowrap;letter-spacing:0.3px;font-family:'Liberation Sans', sans-serif;text-shadow:0.28px 0 0 #1a1a1a;left:690.50px;width:80px;text-align:right">-$8.17</div>
<div style="position:absolute;top:342.02px;height:20px;line-height:20px;font-size:7.3px;color:#1a1a1a;font-weight:normal;font-style:normal;white-space:nowrap;letter-spacing:0.23px;font-family:'Liberation Sans', sans-serif;text-shadow:0.28px 0 0 #1a1a1a;left:767.50px;width:80px;text-align:right">$3951.20</div>
<div style="position:absolute;top:355.54px;height:20px;line-height:20px;font-size:7.4px;color:#1a1a1a;font-weight:normal;font-style:normal;white-space:nowrap;letter-spacing:0.45px;font-family:'Liberation Sans', sans-serif;text-shadow:0.28px 0 0 #1a1a1a;left:200.00px;width:60px;text-align:center">8/20/12</div>
<div style="position:absolute;top:355.54px;height:20px;line-height:20px;font-size:7.3px;color:#1a1a1a;font-weight:normal;font-style:normal;white-space:nowrap;letter-spacing:-0.15px;font-family:'Liberation Sans', sans-serif;text-shadow:0.28px 0 0 #1a1a1a;left:315.00px">IRS</div>
<svg style="position:absolute;left:447.00px;top:359.74px" width="10" height="11" viewBox="0 0 10 11">
<ellipse cx="5" cy="9.2" rx="4.6" ry="1.5" fill="#3a5fd0"/>
<path d="M2.2 0.8 H7.8 L7.2 8.8 H2.8 Z" fill="#f4f4f4" stroke="#999" stroke-width="0.3"/>
<path d="M3.4 0.8 L3.6 8.8 M5 0.8 V8.8 M6.6 0.8 L6.4 8.8" stroke="#d42a2a" stroke-width="0.9"/>
<rect x="2.4" y="6.2" width="5.2" height="1.4" fill="#2f4fc0"/>
</svg>
<div style="position:absolute;left:693.30px;top:363.00px;width:3.20px;height:2.00px;background:#2a2a2a"></div>
<div style="position:absolute;top:355.54px;height:20px;line-height:20px;font-size:7.3px;color:#1a1a1a;font-weight:normal;font-style:normal;white-space:nowrap;letter-spacing:0.3px;font-family:'Liberation Sans', sans-serif;text-shadow:0.28px 0 0 #1a1a1a;left:690.50px;width:80px;text-align:right">-$250.00</div>
<div style="position:absolute;top:355.54px;height:20px;line-height:20px;font-size:7.3px;color:#1a1a1a;font-weight:normal;font-style:normal;white-space:nowrap;letter-spacing:0.23px;font-family:'Liberation Sans', sans-serif;text-shadow:0.28px 0 0 #1a1a1a;left:767.50px;width:80px;text-align:right">$3959.37</div>
<div style="position:absolute;top:369.06px;height:20px;line-height:20px;font-size:7.4px;color:#1a1a1a;font-weight:normal;font-style:normal;white-space:nowrap;letter-spacing:0.45px;font-family:'Liberation Sans', sans-serif;text-shadow:0.28px 0 0 #1a1a1a;left:200.00px;width:60px;text-align:center">8/20/12</div>
<div style="position:absolute;top:369.06px;height:20px;line-height:20px;font-size:7.3px;color:#1a1a1a;font-weight:normal;font-style:normal;white-space:nowrap;letter-spacing:0.12px;font-family:'Liberation Sans', sans-serif;text-shadow:0.28px 0 0 #1a1a1a;left:315.00px">Pauline Egbert</div>
<svg style="position:absolute;left:447.00px;top:373.26px" width="10" height="11" viewBox="0 0 10 11"><text x="5" y="10" font-size="12" font-family="Liberation Sans" font-weight="bold" text-anchor="middle" fill="#4a95cc">?</text></svg>
<div style="position:absolute;left:693.30px;top:377.00px;width:3.20px;height:2.00px;background:#2a2a2a"></div>
<div style="position:absolute;top:369.06px;height:20px;line-height:20px;font-size:7.3px;color:#1a1a1a;font-weight:normal;font-style:normal;white-space:nowrap;letter-spacing:0.3px;font-family:'Liberation Sans', sans-serif;text-shadow:0.28px 0 0 #1a1a1a;left:690.50px;width:80px;text-align:right">-$100.00</div>
<div style="position:absolute;top:369.06px;height:20px;line-height:20px;font-size:7.3px;color:#1a1a1a;font-weight:normal;font-style:normal;white-space:nowrap;letter-spacing:0.23px;font-family:'Liberation Sans', sans-serif;text-shadow:0.28px 0 0 #1a1a1a;left:767.50px;width:80px;text-align:right">$4209.37</div>
<div style="position:absolute;top:382.57px;height:20px;line-height:20px;font-size:7.4px;color:#1a1a1a;font-weight:normal;font-style:normal;white-space:nowrap;letter-spacing:0.45px;font-family:'Liberation Sans', sans-serif;text-shadow:0.28px 0 0 #1a1a1a;left:200.00px;width:60px;text-align:center">8/20/12</div>
<div style="position:absolute;top:382.57px;height:20px;line-height:20px;font-size:7.3px;color:#1a1a1a;font-weight:normal;font-style:normal;white-space:nowrap;letter-spacing:0.12px;font-family:'Liberation Sans', sans-serif;text-shadow:0.28px 0 0 #1a1a1a;left:315.00px">Misc</div>
<div style="position:absolute;left:693.30px;top:390.00px;width:3.20px;height:2.00px;background:#2a2a2a"></div>
<div style="position:absolute;top:382.57px;height:20px;line-height:20px;font-size:7.3px;color:#1a1a1a;font-weight:normal;font-style:normal;white-space:nowrap;letter-spacing:0.3px;font-family:'Liberation Sans', sans-serif;text-shadow:0.28px 0 0 #1a1a1a;left:690.50px;width:80px;text-align:right">-$7.99</div>
<div style="position:absolute;top:382.57px;height:20px;line-height:20px;font-size:7.3px;color:#1a1a1a;font-weight:normal;font-style:normal;white-space:nowrap;letter-spacing:0.23px;font-family:'Liberation Sans', sans-serif;text-shadow:0.28px 0 0 #1a1a1a;left:767.50px;width:80px;text-align:right">$4309.37</div>
<div style="position:absolute;top:396.09px;height:20px;line-height:20px;font-size:7.4px;color:#1a1a1a;font-weight:normal;font-style:normal;white-space:nowrap;letter-spacing:0.45px;font-family:'Liberation Sans', sans-serif;text-shadow:0.28px 0 0 #1a1a1a;left:200.00px;width:60px;text-align:center">8/20/12</div>
<div style="position:absolute;top:396.09px;height:20px;line-height:20px;font-size:7.3px;color:#1a1a1a;font-weight:normal;font-style:normal;white-space:nowrap;letter-spacing:-0.15px;font-family:'Liberation Sans', sans-serif;text-shadow:0.28px 0 0 #1a1a1a;left:315.00px">RUSH CARD FEE REFUND</div>
<div style="position:absolute;left:693.30px;top:404.00px;width:3.20px;height:2.00px;background:#2a2a2a"></div>
<div style="position:absolute;top:396.09px;height:20px;line-height:20px;font-size:7.3px;color:#2f5fd6;font-weight:normal;font-style:normal;white-space:nowrap;letter-spacing:0.3px;font-family:'Liberation Sans', sans-serif;text-shadow:0.28px 0 0 #2f5fd6;left:690.50px;width:80px;text-align:right">$25.00</div>
<div style="position:absolute;top:396.09px;height:20px;line-height:20px;font-size:7.3px;color:#1a1a1a;font-weight:normal;font-style:normal;white-space:nowrap;letter-spacing:0.23px;font-family:'Liberation Sans', sans-serif;text-shadow:0.28px 0 0 #1a1a1a;left:767.50px;width:80px;text-align:right">$4317.36</div>
<div style="position:absolute;top:409.61px;height:20px;line-height:20px;font-size:7.4px;color:#1a1a1a;font-weight:normal;font-style:normal;white-space:nowrap;letter-spacing:0.45px;font-family:'Liberation Sans', sans-serif;text-shadow:0.28px 0 0 #1a1a1a;left:200.00px;width:60px;text-align:center">8/20/12</div>
<div style="position:absolute;top:409.61px;height:20px;line-height:20px;font-size:7.3px;color:#1a1a1a;font-weight:normal;font-style:normal;white-space:nowrap;letter-spacing:0.1px;font-family:'Liberation Sans', sans-serif;text-shadow:0.28px 0 0 #1a1a1a;left:269.00px;width:40px;text-align:center">XFER</div>
<div style="position:absolute;top:409.61px;height:20px;line-height:20px;font-size:7.3px;color:#1a1a1a;font-weight:normal;font-style:normal;white-space:nowrap;letter-spacing:0.12px;font-family:'Liberation Sans', sans-serif;text-shadow:0.28px 0 0 #1a1a1a;left:315.00px">Transfer</div>
<div style="position:absolute;top:409.61px;height:20px;line-height:20px;font-size:7.3px;color:#1a1a1a;font-weight:normal;font-style:normal;white-space:nowrap;letter-spacing:0.22px;font-family:'Liberation Sans', sans-serif;text-shadow:0.28px 0 0 #1a1a1a;left:461.00px">Transfer</div>
<svg style="position:absolute;left:447.00px;top:414.31px" width="10" height="10" viewBox="0 0 10 10">
<path d="M1.5 4.2 Q1.5 1.6 4.5 1.6 H7.2" stroke="#f3b81c" stroke-width="2" fill="none"/>
<path d="M6.5 -0.2 L9.5 1.8 L6.5 3.8 Z" fill="#f3b81c"/>
<path d="M8.5 5.8 Q8.5 8.4 5.5 8.4 H2.8" stroke="#f3b81c" stroke-width="2" fill="none"/>
<path d="M3.5 6.2 L0.5 8.2 L3.5 10.2 Z" fill="#f3b81c"/>
</svg>
<div style="position:absolute;left:693.30px;top:417.00px;width:3.20px;height:2.00px;background:#2a2a2a"></div>
<div style="position:absolute;top:409.61px;height:20px;line-height:20px;font-size:7.3px;color:#2f5fd6;font-weight:normal;font-style:normal;white-space:nowrap;letter-spacing:0.3px;font-family:'Liberation Sans', sans-serif;text-shadow:0.28px 0 0 #2f5fd6;left:690.50px;width:80px;text-align:right">$1250.00</div>
<div style="position:absolute;top:409.61px;height:20px;line-height:20px;font-size:7.3px;color:#1a1a1a;font-weight:normal;font-style:normal;white-space:nowrap;letter-spacing:0.23px;font-family:'Liberation Sans', sans-serif;text-shadow:0.28px 0 0 #1a1a1a;left:767.50px;width:80px;text-align:right">$4292.36</div>
<div style="position:absolute;top:423.12px;height:20px;line-height:20px;font-size:7.4px;color:#1a1a1a;font-weight:normal;font-style:normal;white-space:nowrap;letter-spacing:0.45px;font-family:'Liberation Sans', sans-serif;text-shadow:0.28px 0 0 #1a1a1a;left:200.00px;width:60px;text-align:center">8/17/12</div>
<div style="position:absolute;top:423.12px;height:20px;line-height:20px;font-size:7.3px;color:#1a1a1a;font-weight:normal;font-style:normal;white-space:nowrap;letter-spacing:0.12px;font-family:'Liberation Sans', sans-serif;text-shadow:0.28px 0 0 #1a1a1a;left:315.00px">Verizon Wireless</div>
<div style="position:absolute;top:423.12px;height:20px;line-height:20px;font-size:7.3px;color:#1a1a1a;font-weight:normal;font-style:normal;white-space:nowrap;letter-spacing:0.22px;font-family:'Liberation Sans', sans-serif;text-shadow:0.28px 0 0 #1a1a1a;left:461.00px">Bills: Cell Phone</div>
<svg style="position:absolute;left:446.50px;top:427.82px" width="11" height="10" viewBox="0 0 11 10">
<g transform="rotate(-40 5.5 5)"><rect x="3" y="-0.5" width="5" height="11" rx="1" fill="#5f6f86"/><rect x="3.8" y="1.2" width="3.4" height="5" fill="#b8d0ea"/></g>
</svg>
<div style="position:absolute;top:423.12px;height:20px;line-height:20px;font-size:7.5px;color:#1a1a1a;font-weight:normal;font-style:italic;white-space:nowrap;letter-spacing:0.05px;font-family:'Liberation Sans', sans-serif;text-shadow:0.28px 0 0 #1a1a1a;left:571.50px">Samsung Galaxy S3</div>
<div style="position:absolute;left:693.30px;top:431.00px;width:3.20px;height:2.00px;background:#2a2a2a"></div>
<div style="position:absolute;top:423.12px;height:20px;line-height:20px;font-size:7.3px;color:#1a1a1a;font-weight:normal;font-style:normal;white-space:nowrap;letter-spacing:0.3px;font-family:'Liberation Sans', sans-serif;text-shadow:0.28px 0 0 #1a1a1a;left:690.50px;width:80px;text-align:right">-$284.28</div>
<div style="position:absolute;top:423.12px;height:20px;line-height:20px;font-size:7.3px;color:#1a1a1a;font-weight:normal;font-style:normal;white-space:nowrap;letter-spacing:0.23px;font-family:'Liberation Sans', sans-serif;text-shadow:0.28px 0 0 #1a1a1a;left:767.50px;width:80px;text-align:right">$3042.36</div>
<div style="position:absolute;top:436.64px;height:20px;line-height:20px;font-size:7.4px;color:#1a1a1a;font-weight:normal;font-style:normal;white-space:nowrap;letter-spacing:0.45px;font-family:'Liberation Sans', sans-serif;text-shadow:0.28px 0 0 #1a1a1a;left:200.00px;width:60px;text-align:center">8/17/12</div>
<div style="position:absolute;top:436.64px;height:20px;line-height:20px;font-size:7.3px;color:#1a1a1a;font-weight:normal;font-style:normal;white-space:nowrap;letter-spacing:0.12px;font-family:'Liberation Sans', sans-serif;text-shadow:0.28px 0 0 #1a1a1a;left:315.00px">Toast Bunns</div>
<div style="position:absolute;top:436.64px;height:20px;line-height:20px;font-size:7.3px;color:#1a1a1a;font-weight:normal;font-style:normal;white-space:nowrap;letter-spacing:0.22px;font-family:'Liberation Sans', sans-serif;text-shadow:0.28px 0 0 #1a1a1a;left:461.00px">Groceries</div>
<svg style="position:absolute;left:447.50px;top:440.84px" width="9" height="11" viewBox="0 0 9 11">
<rect x="1" y="2.5" width="7" height="8" rx="1" fill="#33b02a"/>
<rect x="1.5" y="0.6" width="6" height="2.5" fill="#4a4a30"/>
<rect x="2" y="3.5" width="5" height="2" fill="#8fe07a"/>
<circle cx="4.5" cy="7.2" r="1.2" fill="#a6f090"/>
</svg>
<div style="position:absolute;left:693.30px;top:444.00px;width:3.20px;height:2.00px;background:#2a2a2a"></div>
<div style="position:absolute;top:436.64px;height:20px;line-height:20px;font-size:7.3px;color:#1a1a1a;font-weight:normal;font-style:normal;white-space:nowrap;letter-spacing:0.3px;font-family:'Liberation Sans', sans-serif;text-shadow:0.28px 0 0 #1a1a1a;left:690.50px;width:80px;text-align:right">-$5.64</div>
<div style="position:absolute;top:436.64px;height:20px;line-height:20px;font-size:7.3px;color:#1a1a1a;font-weight:normal;font-style:normal;white-space:nowrap;letter-spacing:0.23px;font-family:'Liberation Sans', sans-serif;text-shadow:0.28px 0 0 #1a1a1a;left:767.50px;width:80px;text-align:right">$3326.64</div>
<div style="position:absolute;top:450.16px;height:20px;line-height:20px;font-size:7.4px;color:#1a1a1a;font-weight:normal;font-style:normal;white-space:nowrap;letter-spacing:0.45px;font-family:'Liberation Sans', sans-serif;text-shadow:0.28px 0 0 #1a1a1a;left:200.00px;width:60px;text-align:center">8/16/12</div>
<div style="position:absolute;top:450.16px;height:20px;line-height:20px;font-size:7.3px;color:#1a1a1a;font-weight:normal;font-style:normal;white-space:nowrap;letter-spacing:-0.15px;font-family:'Liberation Sans', sans-serif;text-shadow:0.28px 0 0 #1a1a1a;left:315.00px">RUSH CARD FEE</div>
<div style="position:absolute;left:693.30px;top:458.00px;width:3.20px;height:2.00px;background:#2a2a2a"></div>
<div style="position:absolute;top:450.16px;height:20px;line-height:20px;font-size:7.3px;color:#1a1a1a;font-weight:normal;font-style:normal;white-space:nowrap;letter-spacing:0.3px;font-family:'Liberation Sans', sans-serif;text-shadow:0.28px 0 0 #1a1a1a;left:690.50px;width:80px;text-align:right">-$25.00</div>
<div style="position:absolute;top:450.16px;height:20px;line-height:20px;font-size:7.3px;color:#1a1a1a;font-weight:normal;font-style:normal;white-space:nowrap;letter-spacing:0.23px;font-family:'Liberation Sans', sans-serif;text-shadow:0.28px 0 0 #1a1a1a;left:767.50px;width:80px;text-align:right">$3332.28</div>
<div style="position:absolute;top:463.67px;height:20px;line-height:20px;font-size:7.4px;color:#1a1a1a;font-weight:normal;font-style:normal;white-space:nowrap;letter-spacing:0.45px;font-family:'Liberation Sans', sans-serif;text-shadow:0.28px 0 0 #1a1a1a;left:200.00px;width:60px;text-align:center">8/16/12</div>
<div style="position:absolute;top:463.67px;height:20px;line-height:20px;font-size:7.3px;color:#1a1a1a;font-weight:normal;font-style:normal;white-space:nowrap;letter-spacing:0.12px;font-family:'Liberation Sans', sans-serif;text-shadow:0.28px 0 0 #1a1a1a;left:315.00px">Nordstrom</div>
<div style="position:absolute;top:463.67px;height:20px;line-height:20px;font-size:7.3px;color:#1a1a1a;font-weight:normal;font-style:normal;white-space:nowrap;letter-spacing:0.22px;font-family:'Liberation Sans', sans-serif;text-shadow:0.28px 0 0 #1a1a1a;left:461.00px">Clothing</div>
<svg style="position:absolute;left:446.50px;top:468.87px" width="11" height="9" viewBox="0 0 11 9">
<path d="M5.5 3.5 Q4.5 2.8 4.8 1.8 Q5.5 0.6 6.4 1.6 Q6.8 2.6 5.5 3.5 L0.8 7.6 H10.2 Z" stroke="#333" stroke-width="0.8" fill="none" stroke-linejoin="round"/>
</svg>
<div style="position:absolute;left:693.30px;top:471.00px;width:3.20px;height:2.00px;background:#2a2a2a"></div>
<div style="position:absolute;top:463.67px;height:20px;line-height:20px;font-size:7.3px;color:#1a1a1a;font-weight:normal;font-style:normal;white-space:nowrap;letter-spacing:0.3px;font-family:'Liberation Sans', sans-serif;text-shadow:0.28px 0 0 #1a1a1a;left:690.50px;width:80px;text-align:right">-$187.02</div>
<div style="position:absolute;top:463.67px;height:20px;line-height:20px;font-size:7.3px;color:#1a1a1a;font-weight:normal;font-style:normal;white-space:nowrap;letter-spacing:0.23px;font-family:'Liberation Sans', sans-serif;text-shadow:0.28px 0 0 #1a1a1a;left:767.50px;width:80px;text-align:right">$3357.28</div>
<div style="position:absolute;top:477.19px;height:20px;line-height:20px;font-size:7.4px;color:#1a1a1a;font-weight:normal;font-style:normal;white-space:nowrap;letter-spacing:0.45px;font-family:'Liberation Sans', sans-serif;text-shadow:0.28px 0 0 #1a1a1a;left:200.00px;width:60px;text-align:center">8/15/12</div>
<div style="position:absolute;top:477.19px;height:20px;line-height:20px;font-size:7.3px;color:#1a1a1a;font-weight:normal;font-style:normal;white-space:nowrap;letter-spacing:-0.15px;font-family:'Liberation Sans', sans-serif;text-shadow:0.28px 0 0 #1a1a1a;left:315.00px">ATM</div>
<div style="position:absolute;top:477.19px;height:20px;line-height:20px;font-size:7.3px;color:#1a1a1a;font-weight:normal;font-style:normal;white-space:nowrap;letter-spacing:0.22px;font-family:'Liberation Sans', sans-serif;text-shadow:0.28px 0 0 #1a1a1a;left:461.00px">ATM: Cash Back</div>
<svg style="position:absolute;left:447.50px;top:481.39px" width="9" height="11" viewBox="0 0 9 11"><text x="4.5" y="9.8" font-size="11" font-family="Liberation Sans" font-weight="bold" text-anchor="middle" fill="#3fae2a">$</text></svg>
<div style="position:absolute;left:693.30px;top:485.00px;width:3.20px;height:2.00px;background:#2a2a2a"></div>
<div style="position:absolute;top:477.19px;height:20px;line-height:20px;font-size:7.3px;color:#1a1a1a;font-weight:normal;font-style:normal;white-space:nowrap;letter-spacing:0.3px;font-family:'Liberation Sans', sans-serif;text-shadow:0.28px 0 0 #1a1a1a;left:690.50px;width:80px;text-align:right">-$100.00</div>
<div style="position:absolute;top:477.19px;height:20px;line-height:20px;font-size:7.3px;color:#1a1a1a;font-weight:normal;font-style:normal;white-space:nowrap;letter-spacing:0.23px;font-family:'Liberation Sans', sans-serif;text-shadow:0.28px 0 0 #1a1a1a;left:767.50px;width:80px;text-align:right">$3544.30</div>
<div style="position:absolute;top:490.71px;height:20px;line-height:20px;font-size:7.4px;color:#1a1a1a;font-weight:normal;font-style:normal;white-space:nowrap;letter-spacing:0.45px;font-family:'Liberation Sans', sans-serif;text-shadow:0.28px 0 0 #1a1a1a;left:200.00px;width:60px;text-align:center">8/15/12</div>
<div style="position:absolute;top:490.71px;height:20px;line-height:20px;font-size:7.3px;color:#1a1a1a;font-weight:normal;font-style:normal;white-space:nowrap;letter-spacing:0.12px;font-family:'Liberation Sans', sans-serif;text-shadow:0.28px 0 0 #1a1a1a;left:315.00px">Seasons Buffet</div>
<div style="position:absolute;top:490.71px;height:20px;line-height:20px;font-size:7.3px;color:#1a1a1a;font-weight:normal;font-style:normal;white-space:nowrap;letter-spacing:0.22px;font-family:'Liberation Sans', sans-serif;text-shadow:0.28px 0 0 #1a1a1a;left:461.00px">Dining: Lunch</div>
<svg style="position:absolute;left:447.00px;top:495.41px" width="10" height="10" viewBox="0 0 10 10">
<circle cx="5" cy="5" r="4.6" fill="#2f6fd0"/>
<path d="M3.5 2 V8 M6.5 2 V8 M2.8 2 V4 Q3.5 5 4.2 4 V2" stroke="#fff" stroke-width="0.8" fill="none"/>
</svg>
<div style="position:absolute;left:693.30px;top:498.00px;width:3.20px;height:2.00px;background:#2a2a2a"></div>
<div style="position:absolute;top:490.71px;height:20px;line-height:20px;font-size:7.3px;color:#1a1a1a;font-weight:normal;font-style:normal;white-space:nowrap;letter-spacing:0.3px;font-family:'Liberation Sans', sans-serif;text-shadow:0.28px 0 0 #1a1a1a;left:690.50px;width:80px;text-align:right">-$21.00</div>
<div style="position:absolute;top:490.71px;height:20px;line-height:20px;font-size:7.3px;color:#1a1a1a;font-weight:normal;font-style:normal;white-space:nowrap;letter-spacing:0.23px;font-family:'Liberation Sans', sans-serif;text-shadow:0.28px 0 0 #1a1a1a;left:767.50px;width:80px;text-align:right">$3644.30</div>
<div style="position:absolute;left:851.00px;top:88.30px;width:9.20px;height:414.90px;background:#f3f3f3;border-left:0.5px solid #e0e0e0"></div>
<div style="position:absolute;left:852.80px;top:90.50px;width:4.70px;height:23.20px;background:#c2c2c2;border-radius:3px"></div>
<div style="position:absolute;left:193.60px;top:65.00px;width:1.00px;height:438.70px;background:#5e5e5e"></div>
<div style="position:absolute;left:859.60px;top:65.00px;width:1.20px;height:438.70px;background:#9a9a9a"></div>
<div style="position:absolute;left:193.00px;top:502.90px;width:667.80px;height:1.00px;background:#6b6b6b"></div>
<div style="position:absolute;left:195.50px;top:505.00px;width:22.00px;height:9.80px;background:linear-gradient(#fdfdfd,#e8e8e8);border:0.7px solid #b5b5b5;box-sizing:border-box"></div>
<div style="position:absolute;left:206.60px;top:505.00px;width:0.70px;height:9.80px;background:#b5b5b5"></div>
<div style="position:absolute;top:499.90px;height:20px;line-height:20px;font-size:10px;color:#333;font-weight:normal;font-style:normal;white-space:nowrap;letter-spacing:0px;font-family:'Liberation Sans', sans-serif;text-shadow:0.60px 0 0 #333;left:196.20px;width:10px;text-align:center">+</div>
<div style="position:absolute;top:499.70px;height:20px;line-height:20px;font-size:10px;color:#333;font-weight:normal;font-style:normal;white-space:nowrap;letter-spacing:0px;font-family:'Liberation Sans', sans-serif;text-shadow:0.60px 0 0 #333;left:207.20px;width:10px;text-align:center">−</div>
<div style="position:absolute;left:226.00px;top:504.30px;width:25.80px;height:10.70px;background:linear-gradient(#fbfbfb,#e6e6e6);border:0.7px solid #a8a8a8;border-radius:6px;box-sizing:border-box"></div>
<svg style="position:absolute;left:232.00px;top:504.70px" width="10" height="10" viewBox="0 0 10 10"><g fill="#444"><circle cx="5" cy="5" r="2.6"/><g stroke="#444" stroke-width="1.6"><path d="M5 0.8V9.2M0.8 5H9.2M2 2L8 8M8 2L2 8"/></g><circle cx="5" cy="5" r="1.1" fill="#e9e9e9"/></g></svg>
<svg style="position:absolute;left:243.50px;top:508.50px" width="4" height="3" viewBox="0 0 4 3"><path d="M0 0H4L2 2.5Z" fill="#777"/></svg>
<div style="position:absolute;left:430.50px;top:508.00px;width:52.00px;height:10.80px;background:linear-gradient(#fafafa,#e4e4e4);border:0.7px solid #a5a5a5;border-radius:6px;box-sizing:border-box"></div>
<div style="position:absolute;left:431.00px;top:508.40px;width:18.00px;height:10.00px;background:linear-gradient(#d8d8d8,#c4c4c4);border-radius:5px 0 0 5px"></div>
<div style="position:absolute;left:449.00px;top:508.00px;width:0.60px;height:10.80px;background:#a5a5a5"></div>
<div style="position:absolute;left:466.00px;top:508.00px;width:0.60px;height:10.80px;background:#a5a5a5"></div>
<svg style="position:absolute;left:437.30px;top:509.50px" width="7" height="7" viewBox="0 0 7 7"><path d="M0 0.7H6.5M0 2.5H6.5M0 4.3H6.5M0 6.1H6.5" stroke="#333" stroke-width="0.9"/></svg>
<svg style="position:absolute;left:453.20px;top:509.20px" width="8.5" height="8.8" viewBox="0 0 8.5 8.8">
<rect x="0.4" y="0.4" width="7.7" height="8.0" fill="#fff" stroke="#8d7a6a" stroke-width="0.7"/>
<rect x="0.4" y="0.4" width="7.7" height="2.8" fill="#e04848"/>
<text x="4.25" y="7.300000000000001" font-size="5.6" font-family="Liberation Sans" font-weight="bold" text-anchor="middle" fill="#111">10</text>
</svg>
<svg style="position:absolute;left:468.40px;top:508.30px" width="11" height="10" viewBox="0 0 11 10">
<path d="M5.5 0.5 V8.5 M1.5 2.5 H9.5" stroke="#e03030" stroke-width="0.8"/>
<path d="M0.3 6 L1.5 2.5 L2.7 6 Z M8.3 6 L9.5 2.5 L10.7 6 Z" fill="none" stroke="#e03030" stroke-width="0.6"/>
<path d="M0.3 6 Q1.5 7.3 2.7 6 M8.3 6 Q9.5 7.3 10.7 6" fill="#e88" stroke="#e03030" stroke-width="0.5"/>
<path d="M3.5 9.5 H7.5 L5.5 7.5 Z" fill="#e02020"/>
</svg>
<div style="position:absolute;left:733.80px;top:508.00px;width:62.50px;height:10.80px;background:linear-gradient(#fdfdfd,#e7e7e7);border:0.7px solid #aaa;border-radius:6px;box-sizing:border-box"></div>
<div style="position:absolute;top:503.30px;height:20px;line-height:20px;font-size:7.6px;color:#1a1a1a;font-weight:normal;font-style:normal;white-space:nowrap;letter-spacing:0.1px;font-family:'Liberation Sans', sans-serif;text-shadow:0.10px 0 0 #1a1a1a;left:732.00px;width:60px;text-align:center">Balance</div>
<svg style="position:absolute;left:788.00px;top:509.80px" width="4" height="7" viewBox="0 0 4 7"><path d="M0.3 2.6 L2 0.4 L3.7 2.6Z M0.3 4.4 L2 6.6 L3.7 4.4Z" fill="#555"/></svg>
<div style="position:absolute;top:503.20px;height:20px;line-height:20px;font-size:8.6px;color:#222;font-weight:normal;font-style:normal;white-space:nowrap;letter-spacing:0.2px;font-family:'Liberation Sans', sans-serif;text-shadow:0.28px 0 0 #222;left:812.50px">$5583.41</div>
<div style="position:absolute;left:426.80px;top:200.50px;width:196.20px;height:142.30px;background:#e9e9e9;box-shadow:0 1px 3px rgba(0,0,0,0.15)"></div>
<div style="position:absolute;top:196.30px;height:20px;line-height:20px;font-size:7.8px;color:#4676d4;font-weight:normal;font-style:normal;white-space:nowrap;letter-spacing:0px;font-family:'Liberation Sans', sans-serif;text-shadow:0.00px 0 0 #4676d4;left:427.00px;width:50px;text-align:center">Date</div>
<div style="position:absolute;top:196.30px;height:20px;line-height:20px;font-size:7.8px;color:#4676d4;font-weight:normal;font-style:normal;white-space:nowrap;letter-spacing:0px;font-family:'Liberation Sans', sans-serif;text-shadow:0.00px 0 0 #4676d4;left:509.30px;width:50px;text-align:center">Budget</div>
<div style="position:absolute;top:196.30px;height:20px;line-height:20px;font-size:7.8px;color:#4676d4;font-weight:normal;font-style:normal;white-space:nowrap;letter-spacing:0px;font-family:'Liberation Sans', sans-serif;text-shadow:0.00px 0 0 #4676d4;left:565.00px;width:50px;text-align:center">Cleared</div>
<div style="position:absolute;left:427.00px;top:211.30px;width:54.30px;height:12.50px;background:#fff;border:0.7px solid #b8b8b8;border-top-color:#9a9a9a;box-sizing:border-box;"></div>
<div style="position:absolute;top:207.40px;height:20px;line-height:20px;font-size:8.5px;color:#1a1a1a;font-weight:normal;font-style:normal;white-space:nowrap;letter-spacing:0.24px;font-family:'Liberation Sans', sans-serif;text-shadow:0.28px 0 0 #1a1a1a;left:423.00px;width:60px;text-align:center">8/31/2012</div>
<div style="position:absolute;left:482.50px;top:211.50px;width:7.00px;height:12.50px;background:linear-gradient(#fdfdfd,#e5e5e5);border:0.7px solid #a0a0a0;border-radius:3px;box-sizing:border-box"></div>
<svg style="position:absolute;left:484.25px;top:213.75px" width="4" height="8" viewBox="0 0 4 8"><path d="M0.2 3 L1.75 0.8 L3.3 3Z M0.2 5 L1.75 7.2 L3.3 5Z" fill="#444"/></svg>
<div style="position:absolute;left:491.30px;top:211.80px;width:12.50px;height:11.50px;background:linear-gradient(#fafafa,#e2e2e2);border:0.7px solid #a8a8a8;box-sizing:border-box;border-radius:2px"></div>
<svg style="position:absolute;left:493.50px;top:213.50px" width="8" height="8" viewBox="0 0 8 8"><rect x="0.3" y="0.3" width="7.4" height="7.4" fill="#fff" stroke="#999" stroke-width="0.5"/><rect x="0.3" y="0.3" width="7.4" height="2.2" fill="#d33"/><text x="4" y="7" font-size="4.5" text-anchor="middle" font-family="Liberation Sans" font-weight="bold" fill="#222">10</text></svg>
<div style="position:absolute;top:207.40px;height:20px;line-height:20px;font-size:8.5px;color:#1a1a1a;font-weight:normal;font-style:normal;white-space:nowrap;letter-spacing:0.24px;font-family:'Liberation Sans', sans-serif;text-shadow:0.28px 0 0 #1a1a1a;left:515.00px;width:40px;text-align:center">8/31/12</div>
<div style="position:absolute;left:552.00px;top:212.00px;width:6.30px;height:11.50px;background:linear-gradient(#fdfdfd,#e5e5e5);border:0.7px solid #a0a0a0;border-radius:3px;box-sizing:border-box"></div>
<svg style="position:absolute;left:553.40px;top:213.75px" width="4" height="8" viewBox="0 0 4 8"><path d="M0.2 3 L1.75 0.8 L3.3 3Z M0.2 5 L1.75 7.2 L3.3 5Z" fill="#444"/></svg>
<div style="position:absolute;top:207.40px;height:20px;line-height:20px;font-size:8.5px;color:#1a1a1a;font-weight:normal;font-style:normal;white-space:nowrap;letter-spacing:0.24px;font-family:'Liberation Sans', sans-serif;text-shadow:0.28px 0 0 #1a1a1a;left:571.30px;width:40px;text-align:center">8/31/12</div>
<div style="position:absolute;left:608.30px;top:212.00px;width:6.00px;height:11.50px;background:linear-gradient(#fdfdfd,#e5e5e5);border:0.7px solid #a0a0a0;border-radius:3px;box-sizing:border-box"></div>
<svg style="position:absolute;left:609.55px;top:213.75px" width="4" height="8" viewBox="0 0 4 8"><path d="M0.2 3 L1.75 0.8 L3.3 3Z M0.2 5 L1.75 7.2 L3.3 5Z" fill="#444"/></svg>
<div style="position:absolute;left:427.00px;top:225.00px;width:61.80px;height:11.80px;background:#fff;border:0.7px solid #b8b8b8;border-top-color:#9a9a9a;box-sizing:border-box;"></div>
<div style="position:absolute;left:479.50px;top:225.00px;width:9.30px;height:11.80px;background:linear-gradient(#fdfdfd,#e8e8e8);border:0.7px solid #a9a9a9;box-sizing:border-box"></div>
<svg style="position:absolute;left:482.30px;top:229.80px" width="4" height="3" viewBox="0 0 4 3"><path d="M0 0H4L2 2.5Z" fill="#333"/></svg>
<div style="position:absolute;top:221.00px;height:20px;line-height:20px;font-size:8.2px;color:#9a9a9a;font-weight:normal;font-style:normal;white-space:nowrap;letter-spacing:0px;font-family:'Liberation Sans', sans-serif;text-shadow:0.28px 0 0 #9a9a9a;left:432.50px;width:40px;text-align:center">Ref</div>
<div style="position:absolute;left:491.30px;top:225.00px;width:12.50px;height:12.00px;background:linear-gradient(#fafafa,#e2e2e2);border:0.7px solid #a8a8a8;box-sizing:border-box;border-radius:2px"></div>
<div style="position:absolute;top:221.00px;height:20px;line-height:20px;font-size:7.5px;color:#222;font-weight:bold;font-style:normal;white-space:nowrap;letter-spacing:0px;font-family:'Liberation Sans', sans-serif;text-shadow:0.28px 0 0 #222;left:492.50px;width:10px;text-align:center">#</div>
<div style="position:absolute;top:220.60px;height:20px;line-height:20px;font-size:7.2px;color:#4676d4;font-weight:normal;font-style:normal;white-space:nowrap;letter-spacing:0.15px;font-family:'Liberation Sans', sans-serif;text-shadow:0.10px 0 0 #4676d4;left:509.30px">Reference</div>
<div style="position:absolute;left:427.00px;top:238.80px;width:118.80px;height:12.00px;background:#fff;border:0.7px solid #b8b8b8;border-top-color:#9a9a9a;box-sizing:border-box;"></div>
<div style="position:absolute;left:536.30px;top:238.80px;width:9.50px;height:12.00px;background:linear-gradient(#fdfdfd,#e8e8e8);border:0.7px solid #a9a9a9;box-sizing:border-box"></div>
<svg style="position:absolute;left:539.00px;top:243.60px" width="4" height="3" viewBox="0 0 4 3"><path d="M0 0H4L2 2.5Z" fill="#333"/></svg>
<div style="position:absolute;top:234.80px;height:20px;line-height:20px;font-size:8.2px;color:#1a1a1a;font-weight:normal;font-style:normal;white-space:nowrap;letter-spacing:0.2px;font-family:'Liberation Sans', sans-serif;text-shadow:0.28px 0 0 #1a1a1a;left:431.30px;width:100px;text-align:center">Chicken Bonz</div>
<div style="position:absolute;left:427.00px;top:251.50px;width:118.80px;height:12.30px;background:#fff;border:0.7px solid #b8b8b8;border-top-color:#9a9a9a;box-sizing:border-box;"></div>
<div style="position:absolute;left:536.30px;top:251.50px;width:9.50px;height:12.30px;background:linear-gradient(#fdfdfd,#e8e8e8);border:0.7px solid #a9a9a9;box-sizing:border-box"></div>
<svg style="position:absolute;left:539.00px;top:256.45px" width="4" height="3" viewBox="0 0 4 3"><path d="M0 0H4L2 2.5Z" fill="#333"/></svg>
<div style="position:absolute;top:247.65px;height:20px;line-height:20px;font-size:8.2px;color:#1a1a1a;font-weight:normal;font-style:normal;white-space:nowrap;letter-spacing:0.2px;font-family:'Liberation Sans', sans-serif;text-shadow:0.28px 0 0 #1a1a1a;left:431.30px;width:100px;text-align:center">Dining</div>
<div style="position:absolute;left:427.00px;top:264.50px;width:118.80px;height:12.30px;background:#fff;border:0.7px solid #b8b8b8;border-top-color:#9a9a9a;box-sizing:border-box;"></div>
<div style="position:absolute;left:536.30px;top:264.50px;width:9.50px;height:12.30px;background:linear-gradient(#fdfdfd,#e8e8e8);border:0.7px solid #a9a9a9;box-sizing:border-box"></div>
<svg style="position:absolute;left:539.00px;top:269.45px" width="4" height="3" viewBox="0 0 4 3"><path d="M0 0H4L2 2.5Z" fill="#333"/></svg>
<div style="position:absolute;top:260.65px;height:20px;line-height:20px;font-size:8.2px;color:#8d8d8d;font-weight:normal;font-style:normal;white-space:nowrap;letter-spacing:0.2px;font-family:'Liberation Sans', sans-serif;text-shadow:0.28px 0 0 #8d8d8d;left:431.30px;width:100px;text-align:center">Sub-Category</div>
<div style="position:absolute;top:232.40px;height:20px;line-height:20px;font-size:7.5px;color:#4676d4;font-weight:normal;font-style:normal;white-space:nowrap;letter-spacing:0.05px;font-family:'Liberation Sans', sans-serif;text-shadow:0.00px 0 0 #4676d4;left:552.00px">Payee</div>
<div style="position:absolute;top:245.40px;height:20px;line-height:20px;font-size:7.5px;color:#4676d4;font-weight:normal;font-style:normal;white-space:nowrap;letter-spacing:0.05px;font-family:'Liberation Sans', sans-serif;text-shadow:0.00px 0 0 #4676d4;left:551.30px">Category</div>
<div style="position:absolute;top:257.40px;height:20px;line-height:20px;font-size:7.5px;color:#4676d4;font-weight:normal;font-style:normal;white-space:nowrap;letter-spacing:0.05px;font-family:'Liberation Sans', sans-serif;text-shadow:0.00px 0 0 #4676d4;left:552.00px">Sub-Category</div>
<div style="position:absolute;left:427.00px;top:277.00px;width:118.80px;height:35.50px;background:#fff;border:0.7px solid #b8b8b8;border-top-color:#9a9a9a;box-sizing:border-box;"></div>
<div style="position:absolute;top:274.00px;height:20px;line-height:20px;font-size:7.9px;color:#9a9a9a;font-weight:normal;font-style:normal;white-space:nowrap;letter-spacing:0px;font-family:'Liberation Sans', sans-serif;text-shadow:0.28px 0 0 #9a9a9a;left:429.50px">Note</div>
<div style="position:absolute;top:272.80px;height:20px;line-height:20px;font-size:7.5px;color:#4676d4;font-weight:normal;font-style:normal;white-space:nowrap;letter-spacing:0.05px;font-family:'Liberation Sans', sans-serif;text-shadow:0.00px 0 0 #4676d4;left:552.00px">Note</div>
<div style="position:absolute;top:293.80px;height:20px;line-height:20px;font-size:7.8px;color:#1a1a1a;font-weight:normal;font-style:normal;white-space:nowrap;letter-spacing:0px;font-family:'Liberation Sans', sans-serif;text-shadow:0.28px 0 0 #1a1a1a;left:582.00px;width:30px;text-align:center">Help</div>
<div style="position:absolute;top:293.50px;height:20px;line-height:20px;font-size:10px;color:#4a90d9;font-weight:bold;font-style:normal;white-space:nowrap;letter-spacing:0px;font-family:'Liberation Sans', sans-serif;text-shadow:0.28px 0 0 #4a90d9;left:606.30px;width:10px;text-align:center">?</div>
<div style="position:absolute;top:310.00px;height:20px;line-height:20px;font-size:7.9px;color:#1a1a1a;font-weight:normal;font-style:normal;white-space:nowrap;letter-spacing:0px;font-family:'Liberation Sans', sans-serif;text-shadow:0.28px 0 0 #1a1a1a;left:428.80px;width:50px;text-align:right">Deposit</div>
<div style="position:absolute;left:485.00px;top:316.00px;width:7.00px;height:7.50px;background:linear-gradient(#fdfdfd,#e8e8e8);border:0.7px solid #999;border-radius:1.5px;box-sizing:border-box"></div>
<div style="position:absolute;left:494.50px;top:313.80px;width:51.30px;height:13.20px;background:#fff;border:0.7px solid #b8b8b8;border-top-color:#9a9a9a;box-sizing:border-box;"></div>
<div style="position:absolute;top:310.40px;height:20px;line-height:20px;font-size:8.8px;color:#1a1a1a;font-weight:normal;font-style:normal;white-space:nowrap;letter-spacing:0.3px;font-family:'Liberation Sans', sans-serif;text-shadow:0.28px 0 0 #1a1a1a;left:503.80px;width:40px;text-align:right">23.77</div>
<div style="position:absolute;top:310.40px;height:20px;line-height:20px;font-size:7.5px;color:#4676d4;font-weight:normal;font-style:normal;white-space:nowrap;letter-spacing:0.1px;font-family:'Liberation Sans', sans-serif;text-shadow:0.00px 0 0 #4676d4;left:551.30px">Amount</div>
<div style="position:absolute;left:585.00px;top:314.30px;width:33.00px;height:10.90px;background:linear-gradient(#fdfdfd,#e3e3e3);border:0.7px solid #a0a0a0;border-radius:6px;box-sizing:border-box"></div>
<div style="position:absolute;top:310.15px;height:20px;line-height:20px;font-size:7.9px;color:#1a1a1a;font-weight:normal;font-style:normal;white-space:nowrap;letter-spacing:0.15px;font-family:'Liberation Sans', sans-serif;text-shadow:0.16px 0 0 #1a1a1a;left:576.00px;width:60px;text-align:center">Web</div>
<svg style="position:absolute;left:588.50px;top:315.50px" width="8" height="8" viewBox="0 0 8 8"><circle cx="4" cy="4" r="3.6" fill="#b8c0d0" stroke="#888" stroke-width="0.5"/><ellipse cx="4" cy="3" rx="2.2" ry="1.4" fill="#eef"/></svg>
<div style="position:absolute;left:432.00px;top:328.30px;width:56.00px;height:9.70px;background:linear-gradient(#fdfdfd,#e3e3e3);border:0.7px solid #a0a0a0;border-radius:6px;box-sizing:border-box"></div>
<div style="position:absolute;top:323.55px;height:20px;line-height:20px;font-size:7.6px;color:#1a1a1a;font-weight:normal;font-style:normal;white-space:nowrap;letter-spacing:0.15px;font-family:'Liberation Sans', sans-serif;text-shadow:0.16px 0 0 #1a1a1a;left:435.00px;width:60px;text-align:center">Split/Xfer</div>
<svg style="position:absolute;left:436.00px;top:329.50px" width="8" height="8" viewBox="0 0 8 8"><path d="M1 3 Q1 1 3.5 1 H6 L5 0 M7 5 Q7 7 4.5 7 H2 L3 8" stroke="#f2b81e" stroke-width="1.6" fill="none"/></svg>
<div style="position:absolute;top:323.10px;height:20px;line-height:20px;font-size:7.6px;color:#1a1a1a;font-weight:normal;font-style:normal;white-space:nowrap;letter-spacing:0.2px;font-family:'Liberation Sans', sans-serif;text-shadow:0.28px 0 0 #1a1a1a;left:491.20px;width:20px;text-align:center">Rec</div>
<div style="position:absolute;left:510.80px;top:329.00px;width:6.70px;height:7.80px;background:linear-gradient(#fdfdfd,#e8e8e8);border:0.7px solid #999;border-radius:1.5px;box-sizing:border-box"></div>
<div style="position:absolute;left:521.30px;top:329.00px;width:6.70px;height:7.80px;background:linear-gradient(#fdfdfd,#e8e8e8);border:0.7px solid #999;border-radius:1.5px;box-sizing:border-box"></div>
<svg style="position:absolute;left:521.00px;top:327.50px" width="9" height="10" viewBox="0 0 9 10"><path d="M2 5.8 L3.8 8.6 L7.6 1.2" stroke="#222" stroke-width="1" fill="none"/></svg>
<div style="position:absolute;top:323.10px;height:20px;line-height:20px;font-size:7.6px;color:#1a1a1a;font-weight:normal;font-style:normal;white-space:nowrap;letter-spacing:0.2px;font-family:'Liberation Sans', sans-serif;text-shadow:0.28px 0 0 #1a1a1a;left:531.00px">Paid</div>
<div style="position:absolute;left:550.00px;top:328.30px;width:30.50px;height:9.70px;background:linear-gradient(#fdfdfd,#e3e3e3);border:0.7px solid #a0a0a0;border-radius:6px;box-sizing:border-box"></div>
<div style="position:absolute;top:323.55px;height:20px;line-height:20px;font-size:7.9px;color:#1a1a1a;font-weight:normal;font-style:normal;white-space:nowrap;letter-spacing:0.15px;font-family:'Liberation Sans', sans-serif;text-shadow:0.16px 0 0 #1a1a1a;left:535.30px;width:60px;text-align:center">Cancel</div>
<div style="position:absolute;left:586.80px;top:328.30px;width:30.70px;height:9.70px;background:linear-gradient(#fdfdfd,#e3e3e3);border:0.7px solid #a0a0a0;border-radius:6px;box-sizing:border-box"></div>
<div style="position:absolute;top:323.55px;height:20px;line-height:20px;font-size:7.9px;color:#1a1a1a;font-weight:normal;font-style:normal;white-space:nowrap;letter-spacing:0.15px;font-family:'Liberation Sans', sans-serif;text-shadow:0.16px 0 0 #1a1a1a;left:572.20px;width:60px;text-align:center">Save</div>
<div style="position:absolute;left:503.60px;top:99.00px;width:135.90px;height:42.20px;background:#1b2ab4"></div>
<svg style="position:absolute;left:0.00px;top:0.00px" width="886" height="554" viewBox="0 0 886 554"><path d="M504 112.3 L495 121.2 L504 129.5 Z" fill="#1b2ab4"/></svg>
<div style="position:absolute;top:101.40px;height:20px;line-height:20px;font-size:11px;color:#fff;font-weight:bold;font-style:normal;white-space:nowrap;letter-spacing:0px;font-family:'Liberation Sans', sans-serif;text-shadow:0.28px 0 0 #fff;left:470.00px;width:200px;text-align:center">Color indicates budget</div>
<div style="position:absolute;top:114.80px;height:20px;line-height:20px;font-size:11px;color:#fff;font-weight:bold;font-style:normal;white-space:nowrap;letter-spacing:0px;font-family:'Liberation Sans', sans-serif;text-shadow:0.28px 0 0 #fff;left:470.00px;width:200px;text-align:center">tracking status.</div>
<div style="position:absolute;left:459.30px;top:353.80px;width:135.20px;height:54.40px;background:#1b2ab4"></div>
<svg style="position:absolute;left:0.00px;top:0.00px" width="886" height="554" viewBox="0 0 886 554"><path d="M557.5 354 L565.8 344.5 L575 354 Z" fill="#1b2ab4"/></svg>
<div style="position:absolute;top:356.50px;height:20px;line-height:20px;font-size:11px;color:#fff;font-weight:bold;font-style:normal;white-space:nowrap;letter-spacing:0px;font-family:'Liberation Sans', sans-serif;text-shadow:0.28px 0 0 #fff;left:426.20px;width:200px;text-align:center">Convenient popup</div>
<div style="position:absolute;top:369.70px;height:20px;line-height:20px;font-size:11px;color:#fff;font-weight:bold;font-style:normal;white-space:nowrap;letter-spacing:0px;font-family:'Liberation Sans', sans-serif;text-shadow:0.28px 0 0 #fff;left:426.20px;width:200px;text-align:center">editor with predictive</div>
<div style="position:absolute;top:383.30px;height:20px;line-height:20px;font-size:11px;color:#fff;font-weight:bold;font-style:normal;white-space:nowrap;letter-spacing:0px;font-family:'Liberation Sans', sans-serif;text-shadow:0.28px 0 0 #fff;left:426.20px;width:200px;text-align:center">lookup.</div>
<div style="position:absolute;left:197.50px;top:428.30px;width:135.00px;height:49.70px;background:#1b2ab4"></div>
<svg style="position:absolute;left:0.00px;top:0.00px" width="886" height="554" viewBox="0 0 886 554"><path d="M198 447.5 L186.3 460 L198 472.5 Z" fill="#1b2ab4"/></svg>
<div style="position:absolute;top:428.20px;height:20px;line-height:20px;font-size:10.6px;color:#fff;font-weight:bold;font-style:normal;white-space:nowrap;letter-spacing:0px;font-family:'Liberation Sans', sans-serif;text-shadow:0.28px 0 0 #fff;left:160.30px;width:200px;text-align:center">30 Day Minimum</div>
<div style="position:absolute;top:441.20px;height:20px;line-height:20px;font-size:10.6px;color:#fff;font-weight:bold;font-style:normal;white-space:nowrap;letter-spacing:0px;font-family:'Liberation Sans', sans-serif;text-shadow:0.28px 0 0 #fff;left:160.30px;width:200px;text-align:center">balance forecast</div>
<div style="position:absolute;top:454.90px;height:20px;line-height:20px;font-size:10.6px;color:#fff;font-weight:bold;font-style:normal;white-space:nowrap;letter-spacing:0px;font-family:'Liberation Sans', sans-serif;text-shadow:0.28px 0 0 #fff;left:160.30px;width:200px;text-align:center">graphic.</div>
<div style="position:absolute;left:640.00px;top:447.00px;width:157.50px;height:53.00px;background:#1b2ab4"></div>
<svg style="position:absolute;left:0.00px;top:0.00px" width="886" height="554" viewBox="0 0 886 554"><path d="M775.5 499.8 L783.8 508.8 L792.5 499.8 Z" fill="#1b2ab4"/></svg>
<div style="position:absolute;top:448.40px;height:20px;line-height:20px;font-size:11px;color:#fff;font-weight:bold;font-style:normal;white-space:nowrap;letter-spacing:0px;font-family:'Liberation Sans', sans-serif;text-shadow:0.28px 0 0 #fff;left:618.80px;width:200px;text-align:center">Supports normal Balance,</div>
<div style="position:absolute;top:461.60px;height:20px;line-height:20px;font-size:11px;color:#fff;font-weight:bold;font-style:normal;white-space:nowrap;letter-spacing:0px;font-family:'Liberation Sans', sans-serif;text-shadow:0.28px 0 0 #fff;left:618.80px;width:200px;text-align:center">Reconciled and</div>
<div style="position:absolute;top:474.70px;height:20px;line-height:20px;font-size:11px;color:#fff;font-weight:bold;font-style:normal;white-space:nowrap;letter-spacing:0px;font-family:'Liberation Sans', sans-serif;text-shadow:0.28px 0 0 #fff;left:618.80px;width:200px;text-align:center">Forecast calculations.</div>
</div>
</body></html>
